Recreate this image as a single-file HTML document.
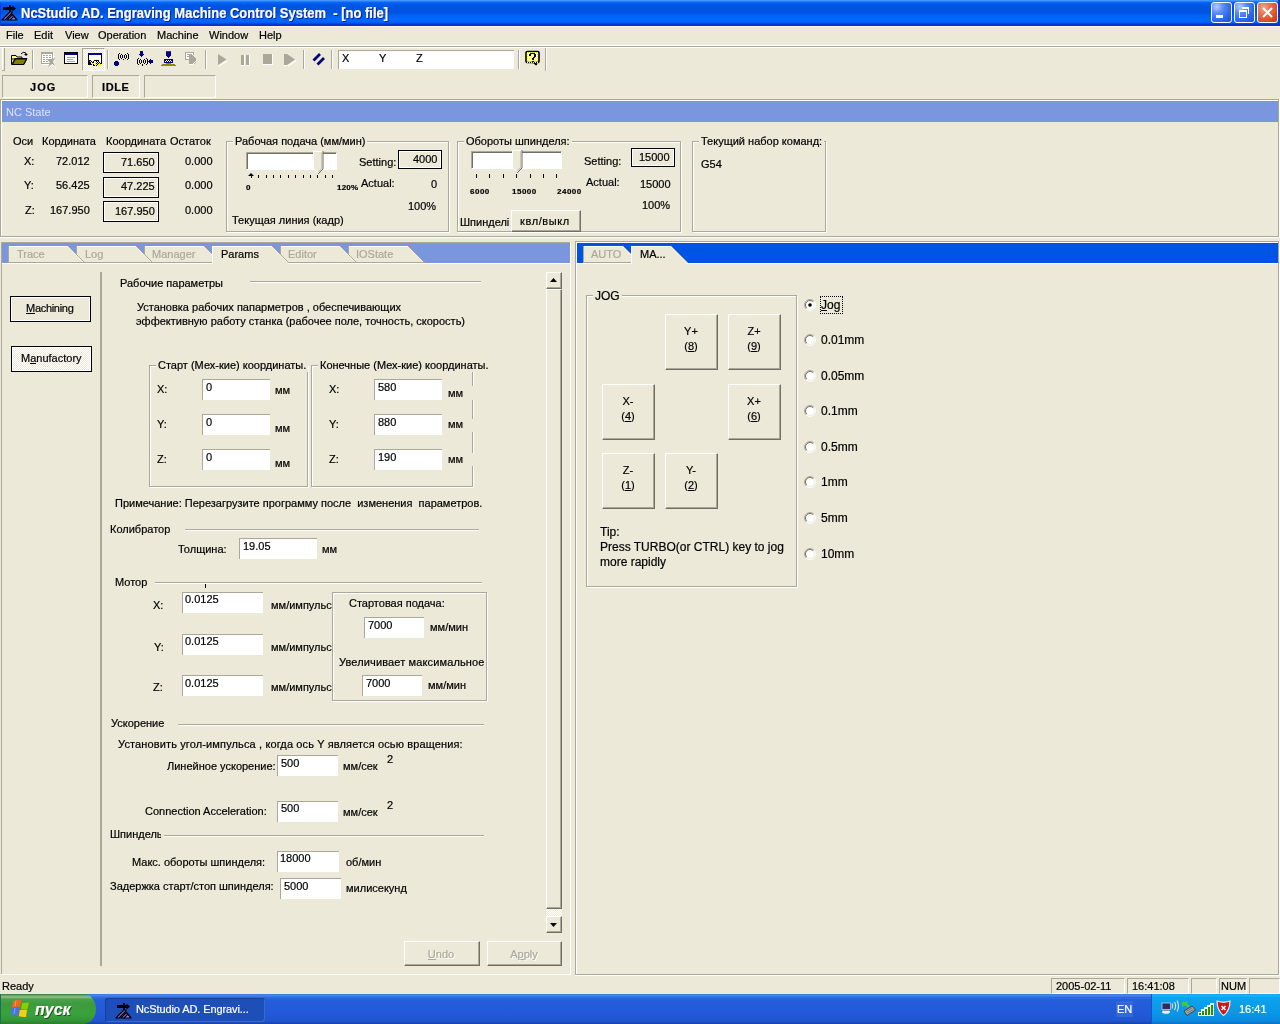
<!DOCTYPE html><html><head><meta charset="utf-8"><style>
html,body{margin:0;padding:0;width:1280px;height:1024px;overflow:hidden;background:#ECE9D8;position:relative}
.t{position:absolute;will-change:transform;-webkit-text-stroke:0.2px currentColor;font-family:"Liberation Sans",sans-serif;font-size:11px;line-height:13px;white-space:nowrap;color:#000}
.b{position:absolute}
svg{position:absolute;overflow:visible}
u{text-decoration:none;border-bottom:1px solid currentColor;line-height:10px;display:inline-block}
</style></head><body>
<div class="b" style="left:0;top:0;width:1280px;height:26px;background:linear-gradient(to bottom,#4A9BFF 0px,#3C8EFF 1px,#0A6CFF 2px,#0061F2 3px,#0058E6 5px,#0054E0 9px,#0054E2 12px,#0059EA 14px,#0062F6 16px,#0068FF 19px,#0064FA 22px,#0058EA 23px,#003AD0 24px,#0030C0 26px)"></div>
<div class="b" style="left:1278px;top:0;width:2px;height:26px;background:#0038C8"></div>
<div class="b" style="left:0;top:3px;width:1px;height:23px;background:#0A40D0"></div>
<svg style="left:0px;top:2px" width="20" height="22" viewBox="0 2 20 22">
<rect x="3" y="7" width="10" height="3" fill="#000"/>
<path d="M12.5 5.5 L16 8.5 L12.5 11.5 Z" fill="#000"/>
<rect x="9" y="5" width="2" height="7" fill="#000"/>
<path d="M2 20 L10 12 L12 12 L12 13 L5 20 Z" fill="#A77FF0" stroke="#000" stroke-width="1.2" stroke-linejoin="round"/>
<path d="M7 20 L12.5 14.5 L17 20 Z" fill="#A77FF0" stroke="#000" stroke-width="1.2" stroke-linejoin="round"/>
<path d="M10 20 L14 16" stroke="#000" stroke-width="1.3"/>
</svg>
<div class="t" style="left:21px;top:3px;font-size:13px;line-height:18px;font-weight:bold;letter-spacing:0px;color:#fff;text-shadow:1px 1px #0A1E8C;transform:scaleY(1.12);transform-origin:0 0">NcStudio AD. Engraving Machine Control System&nbsp; - [no file]</div>
<div class="b" style="left:1211px;top:2px;width:19px;height:19px;border:1px solid #fff;border-radius:3px;background:radial-gradient(circle at 25% 20%,#B8D0FF 0,#5A8DF7 30%,#2F67EC 65%,#1D4FD8 100%)"></div>
<div class="b" style="left:1234px;top:2px;width:19px;height:19px;border:1px solid #fff;border-radius:3px;background:radial-gradient(circle at 25% 20%,#B8D0FF 0,#5A8DF7 30%,#2F67EC 65%,#1D4FD8 100%)"></div>
<div class="b" style="left:1257px;top:2px;width:19px;height:19px;border:1px solid #fff;border-radius:3px;background:radial-gradient(circle at 30% 25%,#F1A58F 0,#E8704F 35%,#D84418 80%,#C23A10 100%)"></div>
<div class="b" style="left:1216px;top:15px;width:7px;height:3px;background:#fff"></div>
<div class="b" style="left:1239px;top:10px;width:6px;height:5px;border:1px solid #fff;border-top-width:2px;box-sizing:content-box"></div>
<div class="b" style="left:1242px;top:7px;width:6px;height:5px;border-top:2px solid #fff;border-right:1px solid #fff"></div>
<svg style="left:1262px;top:7px" width="11" height="11"><path d="M1 1 L10 10 M10 1 L1 10" stroke="#fff" stroke-width="2"/></svg>
<div class="b" style="left:0px;top:26px;width:1280px;height:1px;background:#F7F4E6"></div>
<div class="t" style="left:6px;top:29px;font-size:11px;color:#000;">File</div>
<div class="t" style="left:34px;top:29px;font-size:11px;color:#000;">Edit</div>
<div class="t" style="left:65px;top:29px;font-size:11px;color:#000;">View</div>
<div class="t" style="left:98px;top:29px;font-size:11px;color:#000;">Operation</div>
<div class="t" style="left:157px;top:29px;font-size:11px;color:#000;">Machine</div>
<div class="t" style="left:209px;top:29px;font-size:11px;color:#000;">Window</div>
<div class="t" style="left:259px;top:29px;font-size:11px;color:#000;">Help</div>
<div class="b" style="left:0px;top:45px;width:1280px;height:1px;background:#fff"></div>
<div class="b" style="left:0px;top:46px;width:1280px;height:1px;background:#ACA899"></div>
<div class="b" style="left:0px;top:47px;width:1280px;height:1px;background:#fff"></div>
<div class="b" style="left:2px;top:48px;width:1px;height:23px;background:#fff"></div>
<div class="b" style="left:4px;top:48px;width:1px;height:23px;background:#ACA899"></div>
<div class="b" style="left:2px;top:70px;width:3px;height:1px;background:#ACA899"></div>
<div class="b" style="left:32px;top:50px;width:1px;height:19px;background:#ACA899"></div>
<div class="b" style="left:33px;top:50px;width:1px;height:19px;background:#fff"></div>
<div class="b" style="left:107px;top:50px;width:1px;height:19px;background:#ACA899"></div>
<div class="b" style="left:108px;top:50px;width:1px;height:19px;background:#fff"></div>
<div class="b" style="left:205px;top:50px;width:1px;height:19px;background:#ACA899"></div>
<div class="b" style="left:206px;top:50px;width:1px;height:19px;background:#fff"></div>
<div class="b" style="left:303px;top:50px;width:1px;height:19px;background:#ACA899"></div>
<div class="b" style="left:304px;top:50px;width:1px;height:19px;background:#fff"></div>
<div class="b" style="left:331px;top:50px;width:1px;height:19px;background:#ACA899"></div>
<div class="b" style="left:332px;top:50px;width:1px;height:19px;background:#fff"></div>
<div class="b" style="left:518px;top:50px;width:1px;height:19px;background:#ACA899"></div>
<div class="b" style="left:519px;top:50px;width:1px;height:19px;background:#fff"></div>
<div class="b" style="left:545px;top:48px;width:1px;height:23px;background:#ACA899"></div>
<div class="b" style="left:546px;top:48px;width:1px;height:23px;background:#fff"></div>
<svg style="left:11px;top:51px" width="17" height="15" viewBox="0 0 17 15">
<path d="M10 3 Q12 0 15 2 L15 4" fill="none" stroke="#000" stroke-width="1"/>
<path d="M13 3 L15 5 L17 3" fill="#000"/>
<path d="M0.5 4.5 H5 L6 6 H11 V8 H0.5 Z" fill="#FFFF80" stroke="#000"/>
<path d="M0.5 6 V13.5 H13 L16 7.5 H4 L1 13" fill="#FFFF60" stroke="#000"/>
<path d="M1.5 13.5 L4.5 8 H15.5 L12.5 13.5 Z" fill="#808000" stroke="#000"/>
</svg>
<svg style="left:41px;top:52px" width="16" height="16" viewBox="0 0 16 16" shape-rendering="crispEdges">
<rect x="0" y="0" width="12" height="12" fill="#ACA899"/>
<rect x="1" y="2" width="10" height="9" fill="#fff"/>
<rect x="2" y="3" width="2" height="1" fill="#ACA899"/><rect x="5" y="3" width="2" height="1" fill="#ACA899"/><rect x="8" y="3" width="2" height="1" fill="#ACA899"/>
<rect x="2" y="5" width="2" height="1" fill="#ACA899"/><rect x="5" y="5" width="2" height="1" fill="#ACA899"/><rect x="8" y="5" width="2" height="1" fill="#ACA899"/>
<rect x="2" y="7" width="2" height="1" fill="#ACA899"/><rect x="5" y="7" width="2" height="1" fill="#ACA899"/>
<rect x="2" y="9" width="2" height="1" fill="#ACA899"/><rect x="5" y="9" width="2" height="1" fill="#ACA899"/>
<rect x="12" y="1" width="1" height="9" fill="#fff"/>
<rect x="1" y="12" width="8" height="1" fill="#fff"/>
</svg>
<svg style="left:46px;top:59px" width="12" height="10" viewBox="0 0 12 10">
<path d="M1 0 H6 L9 -1 L7 3 L9 8 L6 5 L2 8 L4 4 Z" fill="#ACA899"/>
<path d="M3 9 L7 5 M7 6 L10 9 M9 3 L8 1" stroke="#fff" stroke-width="1"/>
</svg>
<svg style="left:64px;top:52px" width="15" height="13" viewBox="0 0 15 13">
<rect x="0.5" y="0.5" width="13" height="11" fill="#fff" stroke="#000"/>
<rect x="1" y="1" width="12" height="2" fill="#000080"/>
<path d="M3 5.5h8M3 7.5h6M3 9.5h8" stroke="#ACA899"/>
</svg>
<div class="b" style="left:82px;top:48px;width:23px;height:23px;box-sizing:border-box;border-top:1px solid #ACA899;border-left:1px solid #ACA899;border-right:1px solid #fff;border-bottom:1px solid #fff;background:repeating-conic-gradient(#FFFFFF 0 25%,#ECE9D8 0 50%) 0 0/2px 2px"></div>
<svg style="left:88px;top:52px" width="15" height="15" viewBox="0 0 15 15" shape-rendering="crispEdges">
<rect x="0" y="1" width="14" height="2" fill="#000080"/>
<rect x="0" y="3" width="1" height="10" fill="#000"/><rect x="13" y="3" width="1" height="9" fill="#000"/>
<rect x="1" y="3" width="12" height="8" fill="#fff"/>
<rect x="1" y="8" width="2" height="5" fill="#000"/><rect x="1" y="12" width="3" height="1" fill="#000"/>
<rect x="3" y="9" width="1" height="1" fill="#000"/><rect x="4" y="10" width="1" height="2" fill="#000"/>
<rect x="6" y="8" width="5" height="1" fill="#000"/><rect x="5" y="9" width="1" height="2" fill="#000"/>
<rect x="5" y="12" width="2" height="2" fill="#000"/><rect x="8" y="13" width="1" height="1" fill="#000"/>
<rect x="2" y="9" width="1" height="1" fill="#FFFF00"/><rect x="3" y="10" width="1" height="1" fill="#FFFF00"/><rect x="4" y="11" width="2" height="1" fill="#FFFF00"/>
<rect x="6" y="12" width="2" height="1" fill="#FFFF00"/><rect x="7" y="10" width="1" height="1" fill="#FFFF00"/>
<rect x="8" y="9" width="1" height="1" fill="#000"/><rect x="10" y="9" width="1" height="1" fill="#000"/><rect x="9" y="10" width="1" height="1" fill="#000"/><rect x="11" y="10" width="1" height="1" fill="#000"/><rect x="8" y="11" width="1" height="1" fill="#000"/><rect x="10" y="11" width="1" height="1" fill="#000"/><rect x="12" y="11" width="1" height="1" fill="#000"/>
<rect x="9" y="12" width="1" height="1" fill="#000"/>
<rect x="10" y="12" width="3" height="2" fill="#FFFF00"/><rect x="12" y="10" width="1" height="1" fill="#FFFF00"/><rect x="11" y="11" width="1" height="1" fill="#FFFF00"/>
</svg>
<svg style="left:112px;top:50px" width="20" height="17" viewBox="0 0 20 17" shape-rendering="crispEdges">
<rect x="3" y="11" width="1" height="1" fill="#000080"/><rect x="4" y="11" width="1" height="1" fill="#000080"/><rect x="5" y="11" width="1" height="1" fill="#000080"/><rect x="3" y="15" width="1" height="1" fill="#000080"/><rect x="4" y="15" width="1" height="1" fill="#000080"/><rect x="5" y="15" width="1" height="1" fill="#000080"/><rect x="2" y="12" width="1" height="1" fill="#000080"/><rect x="2" y="13" width="1" height="1" fill="#000080"/><rect x="2" y="14" width="1" height="1" fill="#000080"/><rect x="3" y="12" width="1" height="1" fill="#000080"/><rect x="3" y="13" width="1" height="1" fill="#000080"/><rect x="3" y="14" width="1" height="1" fill="#000080"/><rect x="4" y="12" width="1" height="1" fill="#000080"/><rect x="4" y="13" width="1" height="1" fill="#000080"/><rect x="4" y="14" width="1" height="1" fill="#000080"/><rect x="5" y="12" width="1" height="1" fill="#000080"/><rect x="5" y="13" width="1" height="1" fill="#000080"/><rect x="5" y="14" width="1" height="1" fill="#000080"/><rect x="6" y="12" width="1" height="1" fill="#000080"/><rect x="6" y="13" width="1" height="1" fill="#000080"/><rect x="6" y="14" width="1" height="1" fill="#000080"/>
<rect x="6" y="4" width="1" height="1" fill="#000"/><rect x="6" y="5" width="1" height="1" fill="#000"/><rect x="6" y="6" width="1" height="1" fill="#000"/><rect x="6" y="7" width="1" height="1" fill="#000"/><rect x="6" y="8" width="1" height="1" fill="#000"/><rect x="7" y="3" width="1" height="1" fill="#000"/><rect x="7" y="9" width="1" height="1" fill="#000"/><rect x="8" y="5" width="1" height="1" fill="#000"/><rect x="8" y="6" width="1" height="1" fill="#000"/><rect x="8" y="7" width="1" height="1" fill="#000"/><rect x="10" y="5" width="1" height="1" fill="#000"/><rect x="10" y="6" width="1" height="1" fill="#000"/><rect x="10" y="7" width="1" height="1" fill="#000"/><rect x="9" y="4" width="1" height="1" fill="#000"/><rect x="9" y="8" width="1" height="1" fill="#000"/><rect x="11" y="9" width="1" height="1" fill="#000"/><rect x="12" y="5" width="1" height="1" fill="#000"/><rect x="12" y="6" width="1" height="1" fill="#000"/><rect x="12" y="7" width="1" height="1" fill="#000"/><rect x="14" y="5" width="1" height="1" fill="#000"/><rect x="14" y="6" width="1" height="1" fill="#000"/><rect x="14" y="7" width="1" height="1" fill="#000"/><rect x="13" y="4" width="1" height="1" fill="#000"/><rect x="13" y="8" width="1" height="1" fill="#000"/><rect x="15" y="3" width="1" height="1" fill="#000"/><rect x="15" y="9" width="1" height="1" fill="#000"/><rect x="16" y="4" width="1" height="1" fill="#000"/><rect x="16" y="5" width="1" height="1" fill="#000"/><rect x="16" y="6" width="1" height="1" fill="#000"/><rect x="16" y="7" width="1" height="1" fill="#000"/><rect x="16" y="8" width="1" height="1" fill="#000"/>
</svg>
<svg style="left:134px;top:48px" width="20" height="19" viewBox="0 0 20 19" shape-rendering="crispEdges">
<rect x="6" y="3" width="1" height="1" fill="#000080"/><rect x="6" y="4" width="1" height="1" fill="#000080"/><rect x="6" y="5" width="1" height="1" fill="#000080"/><rect x="7" y="3" width="1" height="1" fill="#000080"/><rect x="7" y="4" width="1" height="1" fill="#000080"/><rect x="7" y="5" width="1" height="1" fill="#000080"/><rect x="8" y="3" width="1" height="1" fill="#000080"/><rect x="8" y="4" width="1" height="1" fill="#000080"/><rect x="8" y="5" width="1" height="1" fill="#000080"/><rect x="5" y="6" width="1" height="1" fill="#000080"/><rect x="6" y="6" width="1" height="1" fill="#000080"/><rect x="7" y="6" width="1" height="1" fill="#000080"/><rect x="8" y="6" width="1" height="1" fill="#000080"/><rect x="9" y="6" width="1" height="1" fill="#000080"/><rect x="6" y="7" width="1" height="1" fill="#000080"/><rect x="7" y="7" width="1" height="1" fill="#000080"/><rect x="8" y="7" width="1" height="1" fill="#000080"/><rect x="7" y="8" width="1" height="1" fill="#000080"/><rect x="14" y="13" width="1" height="1" fill="#000080"/><rect x="15" y="12" width="1" height="1" fill="#000080"/><rect x="15" y="13" width="1" height="1" fill="#000080"/><rect x="15" y="14" width="1" height="1" fill="#000080"/><rect x="16" y="11" width="1" height="1" fill="#000080"/><rect x="16" y="12" width="1" height="1" fill="#000080"/><rect x="16" y="13" width="1" height="1" fill="#000080"/><rect x="16" y="14" width="1" height="1" fill="#000080"/><rect x="16" y="15" width="1" height="1" fill="#000080"/><rect x="17" y="12" width="1" height="1" fill="#000080"/><rect x="17" y="13" width="1" height="1" fill="#000080"/><rect x="17" y="14" width="1" height="1" fill="#000080"/><rect x="18" y="12" width="1" height="1" fill="#000080"/><rect x="18" y="13" width="1" height="1" fill="#000080"/><rect x="18" y="14" width="1" height="1" fill="#000080"/>
<rect x="3" y="11" width="1" height="1" fill="#000"/><rect x="3" y="12" width="1" height="1" fill="#000"/><rect x="3" y="13" width="1" height="1" fill="#000"/><rect x="3" y="14" width="1" height="1" fill="#000"/><rect x="3" y="15" width="1" height="1" fill="#000"/><rect x="4" y="10" width="1" height="1" fill="#000"/><rect x="4" y="16" width="1" height="1" fill="#000"/><rect x="5" y="12" width="1" height="1" fill="#000"/><rect x="5" y="13" width="1" height="1" fill="#000"/><rect x="5" y="14" width="1" height="1" fill="#000"/><rect x="7" y="12" width="1" height="1" fill="#000"/><rect x="7" y="13" width="1" height="1" fill="#000"/><rect x="7" y="14" width="1" height="1" fill="#000"/><rect x="6" y="11" width="1" height="1" fill="#000"/><rect x="6" y="15" width="1" height="1" fill="#000"/><rect x="8" y="16" width="1" height="1" fill="#000"/><rect x="9" y="12" width="1" height="1" fill="#000"/><rect x="9" y="13" width="1" height="1" fill="#000"/><rect x="9" y="14" width="1" height="1" fill="#000"/><rect x="11" y="12" width="1" height="1" fill="#000"/><rect x="11" y="13" width="1" height="1" fill="#000"/><rect x="11" y="14" width="1" height="1" fill="#000"/><rect x="10" y="11" width="1" height="1" fill="#000"/><rect x="10" y="15" width="1" height="1" fill="#000"/><rect x="12" y="10" width="1" height="1" fill="#000"/><rect x="12" y="16" width="1" height="1" fill="#000"/><rect x="13" y="11" width="1" height="1" fill="#000"/><rect x="13" y="12" width="1" height="1" fill="#000"/><rect x="13" y="13" width="1" height="1" fill="#000"/><rect x="13" y="14" width="1" height="1" fill="#000"/><rect x="13" y="15" width="1" height="1" fill="#000"/>
<rect x="8" y="17" width="1" height="1" fill="#000"/>
</svg>
<svg style="left:158px;top:48px" width="20" height="20" viewBox="0 0 20 20" shape-rendering="crispEdges">
<rect x="8" y="3" width="1" height="1" fill="#A0007A"/><rect x="9" y="3" width="1" height="1" fill="#A0007A"/><rect x="10" y="3" width="1" height="1" fill="#A0007A"/><rect x="11" y="3" width="1" height="1" fill="#A0007A"/><rect x="12" y="3" width="1" height="1" fill="#A0007A"/><rect x="8" y="4" width="1" height="1" fill="#000080"/><rect x="8" y="5" width="1" height="1" fill="#000080"/><rect x="8" y="6" width="1" height="1" fill="#000080"/><rect x="8" y="7" width="1" height="1" fill="#000080"/><rect x="9" y="4" width="1" height="1" fill="#000080"/><rect x="9" y="5" width="1" height="1" fill="#000080"/><rect x="9" y="6" width="1" height="1" fill="#000080"/><rect x="9" y="7" width="1" height="1" fill="#000080"/><rect x="10" y="4" width="1" height="1" fill="#000080"/><rect x="10" y="5" width="1" height="1" fill="#000080"/><rect x="10" y="6" width="1" height="1" fill="#000080"/><rect x="10" y="7" width="1" height="1" fill="#000080"/><rect x="11" y="4" width="1" height="1" fill="#000080"/><rect x="11" y="5" width="1" height="1" fill="#000080"/><rect x="11" y="6" width="1" height="1" fill="#000080"/><rect x="11" y="7" width="1" height="1" fill="#000080"/><rect x="12" y="4" width="1" height="1" fill="#000080"/><rect x="12" y="5" width="1" height="1" fill="#000080"/><rect x="12" y="6" width="1" height="1" fill="#000080"/><rect x="12" y="7" width="1" height="1" fill="#000080"/><rect x="9" y="8" width="1" height="1" fill="#000080"/><rect x="10" y="8" width="1" height="1" fill="#000080"/><rect x="11" y="8" width="1" height="1" fill="#000080"/><rect x="10" y="9" width="1" height="1" fill="#000080"/><rect x="6" y="11" width="1" height="1" fill="#000080"/><rect x="6" y="12" width="1" height="1" fill="#000080"/><rect x="6" y="13" width="1" height="1" fill="#000080"/><rect x="6" y="14" width="1" height="1" fill="#000080"/><rect x="7" y="11" width="1" height="1" fill="#000080"/><rect x="7" y="12" width="1" height="1" fill="#000080"/><rect x="7" y="14" width="1" height="1" fill="#000080"/><rect x="8" y="11" width="1" height="1" fill="#000080"/><rect x="8" y="13" width="1" height="1" fill="#000080"/><rect x="8" y="14" width="1" height="1" fill="#000080"/><rect x="9" y="11" width="1" height="1" fill="#000080"/><rect x="9" y="12" width="1" height="1" fill="#000080"/><rect x="9" y="14" width="1" height="1" fill="#000080"/><rect x="10" y="11" width="1" height="1" fill="#000080"/><rect x="10" y="13" width="1" height="1" fill="#000080"/><rect x="10" y="14" width="1" height="1" fill="#000080"/><rect x="11" y="11" width="1" height="1" fill="#000080"/><rect x="11" y="12" width="1" height="1" fill="#000080"/><rect x="11" y="14" width="1" height="1" fill="#000080"/><rect x="12" y="11" width="1" height="1" fill="#000080"/><rect x="12" y="13" width="1" height="1" fill="#000080"/><rect x="12" y="14" width="1" height="1" fill="#000080"/><rect x="13" y="11" width="1" height="1" fill="#000080"/><rect x="13" y="12" width="1" height="1" fill="#000080"/><rect x="13" y="14" width="1" height="1" fill="#000080"/><rect x="14" y="11" width="1" height="1" fill="#000080"/><rect x="14" y="12" width="1" height="1" fill="#000080"/><rect x="14" y="13" width="1" height="1" fill="#000080"/><rect x="14" y="14" width="1" height="1" fill="#000080"/><rect x="8" y="12" width="1" height="1" fill="#fff"/><rect x="10" y="12" width="1" height="1" fill="#fff"/><rect x="12" y="12" width="1" height="1" fill="#fff"/><rect x="7" y="13" width="1" height="1" fill="#fff"/><rect x="9" y="13" width="1" height="1" fill="#fff"/><rect x="11" y="13" width="1" height="1" fill="#fff"/><rect x="13" y="13" width="1" height="1" fill="#fff"/><rect x="8" y="15" width="1" height="1" fill="#8C8C00"/><rect x="9" y="15" width="1" height="1" fill="#8C8C00"/><rect x="10" y="15" width="1" height="1" fill="#8C8C00"/><rect x="11" y="15" width="1" height="1" fill="#8C8C00"/><rect x="12" y="15" width="1" height="1" fill="#8C8C00"/><rect x="4" y="16" width="1" height="1" fill="#8C8C00"/><rect x="5" y="16" width="1" height="1" fill="#8C8C00"/><rect x="6" y="16" width="1" height="1" fill="#8C8C00"/><rect x="7" y="16" width="1" height="1" fill="#8C8C00"/><rect x="8" y="16" width="1" height="1" fill="#8C8C00"/><rect x="9" y="16" width="1" height="1" fill="#8C8C00"/><rect x="10" y="16" width="1" height="1" fill="#8C8C00"/><rect x="11" y="16" width="1" height="1" fill="#8C8C00"/><rect x="12" y="16" width="1" height="1" fill="#8C8C00"/><rect x="13" y="16" width="1" height="1" fill="#8C8C00"/><rect x="14" y="16" width="1" height="1" fill="#8C8C00"/><rect x="15" y="16" width="1" height="1" fill="#8C8C00"/><rect x="16" y="16" width="1" height="1" fill="#8C8C00"/><rect x="3" y="17" width="1" height="1" fill="#8C8C00"/><rect x="4" y="17" width="1" height="1" fill="#8C8C00"/><rect x="5" y="17" width="1" height="1" fill="#8C8C00"/><rect x="6" y="17" width="1" height="1" fill="#8C8C00"/><rect x="7" y="17" width="1" height="1" fill="#8C8C00"/><rect x="8" y="17" width="1" height="1" fill="#8C8C00"/><rect x="9" y="17" width="1" height="1" fill="#8C8C00"/><rect x="10" y="17" width="1" height="1" fill="#8C8C00"/><rect x="11" y="17" width="1" height="1" fill="#8C8C00"/><rect x="12" y="17" width="1" height="1" fill="#8C8C00"/><rect x="13" y="17" width="1" height="1" fill="#8C8C00"/><rect x="14" y="17" width="1" height="1" fill="#8C8C00"/><rect x="15" y="17" width="1" height="1" fill="#8C8C00"/><rect x="16" y="17" width="1" height="1" fill="#8C8C00"/><rect x="17" y="17" width="1" height="1" fill="#8C8C00"/>
</svg>
<svg style="left:182px;top:48px" width="20" height="20" viewBox="0 0 20 20" shape-rendering="crispEdges">
<rect x="4" y="5" width="1" height="1" fill="#fff"/><rect x="4" y="6" width="1" height="1" fill="#fff"/><rect x="4" y="7" width="1" height="1" fill="#fff"/><rect x="4" y="8" width="1" height="1" fill="#fff"/><rect x="4" y="9" width="1" height="1" fill="#fff"/><rect x="4" y="10" width="1" height="1" fill="#fff"/><rect x="5" y="5" width="1" height="1" fill="#fff"/><rect x="5" y="6" width="1" height="1" fill="#fff"/><rect x="5" y="7" width="1" height="1" fill="#fff"/><rect x="5" y="8" width="1" height="1" fill="#fff"/><rect x="5" y="9" width="1" height="1" fill="#fff"/><rect x="5" y="10" width="1" height="1" fill="#fff"/><rect x="6" y="5" width="1" height="1" fill="#fff"/><rect x="6" y="6" width="1" height="1" fill="#fff"/><rect x="6" y="7" width="1" height="1" fill="#fff"/><rect x="6" y="8" width="1" height="1" fill="#fff"/><rect x="6" y="9" width="1" height="1" fill="#fff"/><rect x="6" y="10" width="1" height="1" fill="#fff"/><rect x="7" y="5" width="1" height="1" fill="#fff"/><rect x="7" y="6" width="1" height="1" fill="#fff"/><rect x="7" y="7" width="1" height="1" fill="#fff"/><rect x="7" y="8" width="1" height="1" fill="#fff"/><rect x="7" y="9" width="1" height="1" fill="#fff"/><rect x="7" y="10" width="1" height="1" fill="#fff"/><rect x="8" y="5" width="1" height="1" fill="#fff"/><rect x="8" y="6" width="1" height="1" fill="#fff"/><rect x="8" y="7" width="1" height="1" fill="#fff"/><rect x="8" y="8" width="1" height="1" fill="#fff"/><rect x="8" y="9" width="1" height="1" fill="#fff"/><rect x="8" y="10" width="1" height="1" fill="#fff"/><rect x="9" y="5" width="1" height="1" fill="#fff"/><rect x="9" y="6" width="1" height="1" fill="#fff"/><rect x="9" y="7" width="1" height="1" fill="#fff"/><rect x="9" y="8" width="1" height="1" fill="#fff"/><rect x="9" y="9" width="1" height="1" fill="#fff"/><rect x="9" y="10" width="1" height="1" fill="#fff"/><rect x="10" y="5" width="1" height="1" fill="#fff"/><rect x="10" y="6" width="1" height="1" fill="#fff"/><rect x="10" y="7" width="1" height="1" fill="#fff"/><rect x="10" y="8" width="1" height="1" fill="#fff"/><rect x="10" y="9" width="1" height="1" fill="#fff"/><rect x="10" y="10" width="1" height="1" fill="#fff"/><rect x="3" y="4" width="1" height="1" fill="#ACA899"/><rect x="4" y="4" width="1" height="1" fill="#ACA899"/><rect x="5" y="4" width="1" height="1" fill="#ACA899"/><rect x="6" y="4" width="1" height="1" fill="#ACA899"/><rect x="7" y="4" width="1" height="1" fill="#ACA899"/><rect x="8" y="4" width="1" height="1" fill="#ACA899"/><rect x="9" y="4" width="1" height="1" fill="#ACA899"/><rect x="10" y="4" width="1" height="1" fill="#ACA899"/><rect x="11" y="4" width="1" height="1" fill="#ACA899"/><rect x="3" y="11" width="1" height="1" fill="#ACA899"/><rect x="4" y="11" width="1" height="1" fill="#ACA899"/><rect x="5" y="11" width="1" height="1" fill="#ACA899"/><rect x="6" y="11" width="1" height="1" fill="#ACA899"/><rect x="3" y="4" width="1" height="1" fill="#ACA899"/><rect x="3" y="5" width="1" height="1" fill="#ACA899"/><rect x="3" y="6" width="1" height="1" fill="#ACA899"/><rect x="3" y="7" width="1" height="1" fill="#ACA899"/><rect x="3" y="8" width="1" height="1" fill="#ACA899"/><rect x="3" y="9" width="1" height="1" fill="#ACA899"/><rect x="3" y="10" width="1" height="1" fill="#ACA899"/><rect x="3" y="11" width="1" height="1" fill="#ACA899"/><rect x="11" y="4" width="1" height="1" fill="#ACA899"/><rect x="11" y="5" width="1" height="1" fill="#ACA899"/><rect x="11" y="6" width="1" height="1" fill="#ACA899"/><rect x="5" y="6" width="1" height="1" fill="#ACA899"/><rect x="6" y="6" width="1" height="1" fill="#ACA899"/><rect x="7" y="6" width="1" height="1" fill="#ACA899"/><rect x="8" y="6" width="1" height="1" fill="#ACA899"/><rect x="9" y="6" width="1" height="1" fill="#ACA899"/><rect x="5" y="8" width="1" height="1" fill="#ACA899"/><rect x="6" y="8" width="1" height="1" fill="#ACA899"/><rect x="7" y="7" width="1" height="1" fill="#ACA899"/><rect x="7" y="8" width="1" height="1" fill="#ACA899"/><rect x="7" y="9" width="1" height="1" fill="#ACA899"/><rect x="7" y="10" width="1" height="1" fill="#ACA899"/><rect x="7" y="11" width="1" height="1" fill="#ACA899"/><rect x="7" y="12" width="1" height="1" fill="#ACA899"/><rect x="7" y="13" width="1" height="1" fill="#ACA899"/><rect x="7" y="14" width="1" height="1" fill="#ACA899"/><rect x="7" y="15" width="1" height="1" fill="#ACA899"/><rect x="8" y="7" width="1" height="1" fill="#ACA899"/><rect x="8" y="8" width="1" height="1" fill="#ACA899"/><rect x="8" y="9" width="1" height="1" fill="#ACA899"/><rect x="8" y="10" width="1" height="1" fill="#ACA899"/><rect x="8" y="11" width="1" height="1" fill="#ACA899"/><rect x="8" y="12" width="1" height="1" fill="#ACA899"/><rect x="8" y="13" width="1" height="1" fill="#ACA899"/><rect x="8" y="14" width="1" height="1" fill="#ACA899"/><rect x="8" y="15" width="1" height="1" fill="#ACA899"/><rect x="9" y="7" width="1" height="1" fill="#ACA899"/><rect x="9" y="8" width="1" height="1" fill="#ACA899"/><rect x="9" y="9" width="1" height="1" fill="#ACA899"/><rect x="9" y="10" width="1" height="1" fill="#ACA899"/><rect x="9" y="11" width="1" height="1" fill="#ACA899"/><rect x="9" y="12" width="1" height="1" fill="#ACA899"/><rect x="9" y="13" width="1" height="1" fill="#ACA899"/><rect x="9" y="14" width="1" height="1" fill="#ACA899"/><rect x="9" y="15" width="1" height="1" fill="#ACA899"/><rect x="10" y="7" width="1" height="1" fill="#ACA899"/><rect x="10" y="8" width="1" height="1" fill="#ACA899"/><rect x="10" y="9" width="1" height="1" fill="#ACA899"/><rect x="10" y="10" width="1" height="1" fill="#ACA899"/><rect x="10" y="11" width="1" height="1" fill="#ACA899"/><rect x="10" y="12" width="1" height="1" fill="#ACA899"/><rect x="10" y="13" width="1" height="1" fill="#ACA899"/><rect x="10" y="14" width="1" height="1" fill="#ACA899"/><rect x="10" y="15" width="1" height="1" fill="#ACA899"/><rect x="11" y="8" width="1" height="1" fill="#ACA899"/><rect x="11" y="9" width="1" height="1" fill="#ACA899"/><rect x="11" y="10" width="1" height="1" fill="#ACA899"/><rect x="11" y="11" width="1" height="1" fill="#ACA899"/><rect x="11" y="12" width="1" height="1" fill="#ACA899"/><rect x="11" y="13" width="1" height="1" fill="#ACA899"/><rect x="11" y="14" width="1" height="1" fill="#ACA899"/><rect x="11" y="15" width="1" height="1" fill="#ACA899"/><rect x="12" y="9" width="1" height="1" fill="#ACA899"/><rect x="12" y="10" width="1" height="1" fill="#ACA899"/><rect x="12" y="11" width="1" height="1" fill="#ACA899"/><rect x="12" y="12" width="1" height="1" fill="#ACA899"/><rect x="12" y="13" width="1" height="1" fill="#ACA899"/><rect x="12" y="14" width="1" height="1" fill="#ACA899"/><rect x="12" y="15" width="1" height="1" fill="#ACA899"/><rect x="13" y="10" width="1" height="1" fill="#ACA899"/><rect x="13" y="11" width="1" height="1" fill="#ACA899"/><rect x="13" y="12" width="1" height="1" fill="#ACA899"/><rect x="13" y="13" width="1" height="1" fill="#ACA899"/><rect x="13" y="14" width="1" height="1" fill="#ACA899"/><rect x="14" y="12" width="1" height="1" fill="#ACA899"/><rect x="7" y="16" width="1" height="1" fill="#fff"/><rect x="8" y="16" width="1" height="1" fill="#fff"/><rect x="9" y="16" width="1" height="1" fill="#fff"/><rect x="10" y="16" width="1" height="1" fill="#fff"/><rect x="11" y="15" width="1" height="1" fill="#fff"/><rect x="12" y="14" width="1" height="1" fill="#fff"/><rect x="13" y="13" width="1" height="1" fill="#fff"/><rect x="14" y="12" width="1" height="1" fill="#fff"/><rect x="15" y="11" width="1" height="1" fill="#fff"/>
</svg>
<svg style="left:210px;top:50px" width="92" height="20" viewBox="0 0 92 20">
<path d="M8 4 L16.5 9.5 L8 15 Z" fill="#ACA899"/>
<path d="M9 16 L17.5 10.5" stroke="#fff" stroke-width="1.2"/>
<g shape-rendering="crispEdges">
<rect x="31" y="5" width="3" height="10" fill="#ACA899"/><rect x="34" y="5" width="1" height="11" fill="#fff"/><rect x="31" y="15" width="3" height="1" fill="#fff"/>
<rect x="36" y="5" width="3" height="10" fill="#ACA899"/><rect x="39" y="5" width="1" height="11" fill="#fff"/><rect x="36" y="15" width="3" height="1" fill="#fff"/>
<rect x="53" y="4" width="9" height="10" fill="#ACA899"/><rect x="62" y="4" width="1" height="11" fill="#fff"/><rect x="53" y="14" width="9" height="1" fill="#fff"/>
<rect x="74" y="4" width="3" height="11" fill="#ACA899"/><rect x="74" y="15" width="3" height="1" fill="#fff"/>
</g>
<path d="M77 4 L85 9.5 L77 15 Z" fill="#ACA899"/>
<path d="M78 16 L86 10.5" stroke="#fff" stroke-width="1.2"/>
</svg>
<svg style="left:312px;top:52px" width="13" height="13" viewBox="0 0 13 13">
<path d="M1.5 8.5 L8 2 M5.5 12.5 L12 6" stroke="#000080" stroke-width="2.8"/>
</svg>
<div class="b" style="left:338px;top:50px;width:176px;height:19px;background:#fff;border-top:1px solid #ACA899;border-left:1px solid #ACA899;box-sizing:border-box"></div>
<div class="t" style="left:342px;top:52px;font-size:11px;color:#000;">X</div>
<div class="t" style="left:379px;top:52px;font-size:11px;color:#000;">Y</div>
<div class="t" style="left:416px;top:52px;font-size:11px;color:#000;">Z</div>
<svg style="left:525px;top:50px" width="16" height="17" viewBox="0 0 16 17">
<path d="M2.5 1.5 h10 a1.5 1.5 0 0 1 1.5 1.5 v8 a1.5 1.5 0 0 1 -1.5 1.5 h-2 l1 2.5 l-3 -2.5 h-6 a1.5 1.5 0 0 1 -1.5 -1.5 v-8 a1.5 1.5 0 0 1 1.5 -1.5z" fill="#fff" stroke="#000" stroke-width="1.6"/>
<g shape-rendering="crispEdges"><rect x="2" y="2" width="1" height="1" fill="#FFFF00"/><rect x="2" y="4" width="1" height="1" fill="#FFFF00"/><rect x="2" y="6" width="1" height="1" fill="#FFFF00"/><rect x="2" y="8" width="1" height="1" fill="#FFFF00"/><rect x="2" y="10" width="1" height="1" fill="#FFFF00"/><rect x="2" y="12" width="1" height="1" fill="#FFFF00"/><rect x="4" y="2" width="1" height="1" fill="#FFFF00"/><rect x="4" y="4" width="1" height="1" fill="#FFFF00"/><rect x="4" y="6" width="1" height="1" fill="#FFFF00"/><rect x="4" y="8" width="1" height="1" fill="#FFFF00"/><rect x="4" y="10" width="1" height="1" fill="#FFFF00"/><rect x="4" y="12" width="1" height="1" fill="#FFFF00"/><rect x="6" y="2" width="1" height="1" fill="#FFFF00"/><rect x="6" y="4" width="1" height="1" fill="#FFFF00"/><rect x="6" y="6" width="1" height="1" fill="#FFFF00"/><rect x="6" y="8" width="1" height="1" fill="#FFFF00"/><rect x="6" y="10" width="1" height="1" fill="#FFFF00"/><rect x="6" y="12" width="1" height="1" fill="#FFFF00"/><rect x="8" y="2" width="1" height="1" fill="#FFFF00"/><rect x="8" y="4" width="1" height="1" fill="#FFFF00"/><rect x="8" y="6" width="1" height="1" fill="#FFFF00"/><rect x="8" y="8" width="1" height="1" fill="#FFFF00"/><rect x="8" y="10" width="1" height="1" fill="#FFFF00"/><rect x="8" y="12" width="1" height="1" fill="#FFFF00"/><rect x="10" y="2" width="1" height="1" fill="#FFFF00"/><rect x="10" y="4" width="1" height="1" fill="#FFFF00"/><rect x="10" y="6" width="1" height="1" fill="#FFFF00"/><rect x="10" y="8" width="1" height="1" fill="#FFFF00"/><rect x="10" y="10" width="1" height="1" fill="#FFFF00"/><rect x="10" y="12" width="1" height="1" fill="#FFFF00"/><rect x="12" y="2" width="1" height="1" fill="#FFFF00"/><rect x="12" y="4" width="1" height="1" fill="#FFFF00"/><rect x="12" y="6" width="1" height="1" fill="#FFFF00"/><rect x="12" y="8" width="1" height="1" fill="#FFFF00"/><rect x="12" y="10" width="1" height="1" fill="#FFFF00"/><rect x="12" y="12" width="1" height="1" fill="#FFFF00"/></g>
<g shape-rendering="crispEdges" fill="#000080"><rect x="5" y="3" width="5" height="1"/><rect x="4" y="4" width="2" height="2"/><rect x="9" y="4" width="2" height="3"/><rect x="8" y="7" width="2" height="1"/><rect x="7" y="8" width="2" height="2"/><rect x="7" y="11" width="2" height="1"/></g>
</svg>
<div class="b" style="left:2px;top:75px;width:86px;height:23px;box-sizing:border-box;border-top:1px solid #ACA899;border-left:1px solid #ACA899;border-right:1px solid #fff;border-bottom:1px solid #fff"></div>
<div class="b" style="left:92px;top:75px;width:48px;height:23px;box-sizing:border-box;border-top:1px solid #ACA899;border-left:1px solid #ACA899;border-right:1px solid #fff;border-bottom:1px solid #fff"></div>
<div class="b" style="left:144px;top:75px;width:72px;height:23px;box-sizing:border-box;border-top:1px solid #ACA899;border-left:1px solid #ACA899;border-right:1px solid #fff;border-bottom:1px solid #fff"></div>
<div class="t" style="left:30px;top:81px;font-size:11px;font-weight:bold;letter-spacing:1.1px">JOG</div>
<div class="t" style="left:102px;top:81px;font-size:11px;font-weight:bold;letter-spacing:0.6px">IDLE</div>
<div class="b" style="left:0px;top:99px;width:1279px;height:1px;background:#ACA899"></div>
<div class="b" style="left:1px;top:100px;width:1277px;height:1px;background:#fff"></div>
<div class="b" style="left:0px;top:99px;width:1px;height:138px;background:#ACA899"></div>
<div class="b" style="left:1px;top:100px;width:1px;height:137px;background:#fff"></div>
<div class="b" style="left:1278px;top:99px;width:1px;height:138px;background:#ACA899"></div>
<div class="b" style="left:1279px;top:99px;width:1px;height:139px;background:#fff"></div>
<div class="b" style="left:2px;top:101px;width:1276px;height:21px;background:#7A96DF"></div>
<div class="t" style="left:6px;top:106px;font-size:11px;color:#D8E4F8;-webkit-text-stroke:0">NC State</div>
<div class="b" style="left:0px;top:236px;width:1279px;height:1px;background:#ACA899"></div>
<div class="b" style="left:0px;top:237px;width:1280px;height:1px;background:#fff"></div>
<div class="t" style="left:13px;top:135px;font-size:11px;color:#000;">Оси</div>
<div class="t" style="left:42px;top:135px;font-size:11px;color:#000;">Кордината</div>
<div class="t" style="left:106px;top:135px;font-size:11px;color:#000;">Координата</div>
<div class="t" style="left:170px;top:135px;font-size:11px;color:#000;">Остаток</div>
<div class="t" style="right:1246px;top:155px;font-size:11px;color:#000;">X:</div>
<div class="t" style="right:1190px;top:155px;font-size:11px;color:#000;">72.012</div>
<div class="t" style="right:1067px;top:155px;font-size:11px;color:#000;">0.000</div>
<div class="b" style="left:103px;top:152px;width:56px;height:21px;border:1px solid #000;box-sizing:border-box;box-shadow:inset 1px 1px #fff,inset -1px -1px #fff"></div>
<div class="t" style="right:1125px;top:156px;font-size:11px;color:#000;">71.650</div>
<div class="t" style="right:1246px;top:179px;font-size:11px;color:#000;">Y:</div>
<div class="t" style="right:1190px;top:179px;font-size:11px;color:#000;">56.425</div>
<div class="t" style="right:1067px;top:179px;font-size:11px;color:#000;">0.000</div>
<div class="b" style="left:103px;top:177px;width:56px;height:21px;border:1px solid #000;box-sizing:border-box;box-shadow:inset 1px 1px #fff,inset -1px -1px #fff"></div>
<div class="t" style="right:1125px;top:180px;font-size:11px;color:#000;">47.225</div>
<div class="t" style="right:1245px;top:204px;font-size:11px;color:#000;">Z:</div>
<div class="t" style="right:1190px;top:204px;font-size:11px;color:#000;">167.950</div>
<div class="t" style="right:1067px;top:204px;font-size:11px;color:#000;">0.000</div>
<div class="b" style="left:103px;top:201px;width:56px;height:21px;border:1px solid #000;box-sizing:border-box;box-shadow:inset 1px 1px #fff,inset -1px -1px #fff"></div>
<div class="t" style="right:1125px;top:205px;font-size:11px;color:#000;">167.950</div>
<div class="b" style="left:227px;top:142px;width:223px;height:91px;border:1px solid #fff;box-sizing:border-box"></div>
<div class="b" style="left:226px;top:141px;width:223px;height:91px;border:1px solid #ACA899;box-sizing:border-box"></div>
<div class="t" style="left:233px;top:135px;padding:0 2px;background:#ECE9D8;font-size:11px">Рабочая подача (мм/мин)</div>
<div class="b" style="left:246px;top:152px;width:91px;height:18px;background:#fff;box-sizing:border-box;border-top:1px solid #ACA899;border-left:1px solid #ACA899;border-right:1px solid #fff;border-bottom:1px solid #fff;box-shadow:inset 1px 1px #716F64"></div>
<svg style="left:313px;top:151px" width="11" height="23" viewBox="0 0 11 23">
<path d="M0.5 0.5 H9.5 V17.5 L5 22 L0.5 17.5 Z" fill="#ECE9D8" stroke="#fff"/>
<path d="M10 0 V18 L5 23" stroke="#716F64" fill="none"/>
<path d="M9 1 V17.5 L5 21.5" stroke="#ACA899" fill="none"/>
</svg>
<div class="b" style="left:251px;top:175px;width:1px;height:3px;background:#000"></div>
<div class="b" style="left:258px;top:175px;width:1px;height:3px;background:#000"></div>
<div class="b" style="left:266px;top:175px;width:1px;height:3px;background:#000"></div>
<div class="b" style="left:273px;top:175px;width:1px;height:3px;background:#000"></div>
<div class="b" style="left:280px;top:175px;width:1px;height:3px;background:#000"></div>
<div class="b" style="left:288px;top:175px;width:1px;height:3px;background:#000"></div>
<div class="b" style="left:295px;top:175px;width:1px;height:3px;background:#000"></div>
<div class="b" style="left:303px;top:175px;width:1px;height:3px;background:#000"></div>
<div class="b" style="left:310px;top:175px;width:1px;height:3px;background:#000"></div>
<div class="b" style="left:317px;top:175px;width:1px;height:3px;background:#000"></div>
<div class="b" style="left:325px;top:175px;width:1px;height:3px;background:#000"></div>
<div class="b" style="left:332px;top:175px;width:1px;height:3px;background:#000"></div>
<svg style="left:248px;top:173px" width="7" height="4"><path d="M0 3 L3 0 L6 3Z" fill="#000"/></svg>
<div class="t" style="left:246px;top:183px;font-size:8px;line-height:10px;font-weight:bold">0</div>
<div class="t" style="left:337px;top:183px;font-size:8px;line-height:10px;font-weight:bold;letter-spacing:0.2px">120%</div>
<div class="t" style="left:359px;top:156px;font-size:11px;color:#000;">Setting:</div>
<div class="b" style="left:398px;top:150px;width:44px;height:19px;border:1px solid #000;box-sizing:border-box;box-shadow:inset 1px 1px #fff,inset -1px -1px #fff"></div>
<div class="t" style="right:843px;top:153px;font-size:11px;color:#000;">4000</div>
<div class="t" style="left:361px;top:177px;font-size:11px;color:#000;">Actual:</div>
<div class="t" style="right:843px;top:178px;font-size:11px;color:#000;">0</div>
<div class="t" style="right:844px;top:200px;font-size:11px;color:#000;">100%</div>
<div class="t" style="left:232px;top:214px;font-size:11px;color:#000;">Текущая линия (кадр)</div>
<div class="b" style="left:458px;top:142px;width:224px;height:91px;border:1px solid #fff;box-sizing:border-box"></div>
<div class="b" style="left:457px;top:141px;width:224px;height:91px;border:1px solid #ACA899;box-sizing:border-box"></div>
<div class="t" style="left:464px;top:135px;padding:0 2px;background:#ECE9D8;font-size:11px">Обороты шпинделя:</div>
<div class="b" style="left:471px;top:151px;width:91px;height:18px;background:#fff;box-sizing:border-box;border-top:1px solid #ACA899;border-left:1px solid #ACA899;border-right:1px solid #fff;border-bottom:1px solid #fff;box-shadow:inset 1px 1px #716F64"></div>
<svg style="left:512px;top:150px" width="11" height="23" viewBox="0 0 11 23">
<path d="M0.5 0.5 H9.5 V17.5 L5 22 L0.5 17.5 Z" fill="#ECE9D8" stroke="#fff"/>
<path d="M10 0 V18 L5 23" stroke="#716F64" fill="none"/>
<path d="M9 1 V17.5 L5 21.5" stroke="#ACA899" fill="none"/>
</svg>
<div class="b" style="left:476px;top:174px;width:1px;height:4px;background:#000"></div>
<div class="b" style="left:489px;top:174px;width:1px;height:4px;background:#000"></div>
<div class="b" style="left:503px;top:174px;width:1px;height:4px;background:#000"></div>
<div class="b" style="left:516px;top:174px;width:1px;height:4px;background:#000"></div>
<div class="b" style="left:530px;top:174px;width:1px;height:4px;background:#000"></div>
<div class="b" style="left:543px;top:174px;width:1px;height:4px;background:#000"></div>
<div class="b" style="left:556px;top:174px;width:1px;height:4px;background:#000"></div>
<div class="t" style="left:470px;top:187px;font-size:8px;line-height:10px;font-weight:bold;letter-spacing:0.5px">6000</div>
<div class="t" style="left:512px;top:187px;font-size:8px;line-height:10px;font-weight:bold;letter-spacing:0.5px">15000</div>
<div class="t" style="left:557px;top:187px;font-size:8px;line-height:10px;font-weight:bold;letter-spacing:0.5px">24000</div>
<div class="t" style="left:584px;top:155px;font-size:11px;color:#000;">Setting:</div>
<div class="b" style="left:631px;top:148px;width:44px;height:19px;border:1px solid #000;box-sizing:border-box;box-shadow:inset 1px 1px #fff,inset -1px -1px #fff"></div>
<div class="t" style="right:610px;top:151px;font-size:11px;color:#000;">15000</div>
<div class="t" style="left:586px;top:176px;font-size:11px;color:#000;">Actual:</div>
<div class="t" style="right:609px;top:178px;font-size:11px;color:#000;">15000</div>
<div class="t" style="right:610px;top:199px;font-size:11px;color:#000;">100%</div>
<div class="t" style="left:460px;top:216px;font-size:11px;color:#000;">Шпинделі</div>
<div class="b" style="left:511px;top:210px;width:70px;height:22px;background:#ECE9D8;box-sizing:border-box;border-top:1px solid #fff;border-left:1px solid #fff;border-right:1px solid #716F64;border-bottom:1px solid #716F64;box-shadow:inset -1px -1px #ACA899"></div>
<div class="t" style="left:445px;width:200px;text-align:center;top:215px;font-size:11px;color:#000;letter-spacing:0.6px">квл/выкл</div>
<div class="b" style="left:693px;top:142px;width:134px;height:91px;border:1px solid #fff;box-sizing:border-box"></div>
<div class="b" style="left:692px;top:141px;width:134px;height:91px;border:1px solid #ACA899;box-sizing:border-box"></div>
<div class="t" style="left:699px;top:135px;padding:0 2px;background:#ECE9D8;font-size:11px">Текущий набор команд:</div>
<div class="t" style="left:701px;top:158px;font-size:11px;color:#000;">G54</div>
<div class="b" style="left:1px;top:242px;width:570px;height:1px;background:#ACA899"></div>
<div class="b" style="left:1px;top:242px;width:1px;height:733px;background:#ACA899"></div>
<div class="b" style="left:570px;top:242px;width:1px;height:733px;background:#fff"></div>
<div class="b" style="left:1px;top:974px;width:570px;height:1px;background:#fff"></div>
<svg style="left:2px;top:243px" width="568" height="21" shape-rendering="crispEdges"><rect x="0" y="0" width="568" height="20" fill="#7A96DF"/><path d="M346 3 H406 L422 19 V20 H346 Z" fill="#ECE9D8"/><path d="M347 3.5 H406" stroke="#fff"/><path d="M346.5 3 V19.5" stroke="#ACA899"/><path d="M346 19.5 H423" stroke="#ACA899"/><rect x="406" y="3" width="1" height="1" fill="#ACA899"/><rect x="407" y="4" width="1" height="1" fill="#ACA899"/><rect x="406" y="4" width="1" height="1" fill="#fff" opacity="0.55"/><rect x="408" y="5" width="1" height="1" fill="#ACA899"/><rect x="407" y="5" width="1" height="1" fill="#fff" opacity="0.55"/><rect x="409" y="6" width="1" height="1" fill="#ACA899"/><rect x="408" y="6" width="1" height="1" fill="#fff" opacity="0.55"/><rect x="410" y="7" width="1" height="1" fill="#ACA899"/><rect x="409" y="7" width="1" height="1" fill="#fff" opacity="0.55"/><rect x="411" y="8" width="1" height="1" fill="#ACA899"/><rect x="410" y="8" width="1" height="1" fill="#fff" opacity="0.55"/><rect x="412" y="9" width="1" height="1" fill="#ACA899"/><rect x="411" y="9" width="1" height="1" fill="#fff" opacity="0.55"/><rect x="413" y="10" width="1" height="1" fill="#ACA899"/><rect x="412" y="10" width="1" height="1" fill="#fff" opacity="0.55"/><rect x="414" y="11" width="1" height="1" fill="#ACA899"/><rect x="413" y="11" width="1" height="1" fill="#fff" opacity="0.55"/><rect x="415" y="12" width="1" height="1" fill="#ACA899"/><rect x="414" y="12" width="1" height="1" fill="#fff" opacity="0.55"/><rect x="416" y="13" width="1" height="1" fill="#ACA899"/><rect x="415" y="13" width="1" height="1" fill="#fff" opacity="0.55"/><rect x="417" y="14" width="1" height="1" fill="#ACA899"/><rect x="416" y="14" width="1" height="1" fill="#fff" opacity="0.55"/><rect x="418" y="15" width="1" height="1" fill="#ACA899"/><rect x="417" y="15" width="1" height="1" fill="#fff" opacity="0.55"/><rect x="419" y="16" width="1" height="1" fill="#ACA899"/><rect x="418" y="16" width="1" height="1" fill="#fff" opacity="0.55"/><rect x="420" y="17" width="1" height="1" fill="#ACA899"/><rect x="419" y="17" width="1" height="1" fill="#fff" opacity="0.55"/><rect x="421" y="18" width="1" height="1" fill="#ACA899"/><rect x="420" y="18" width="1" height="1" fill="#fff" opacity="0.55"/><rect x="422" y="19" width="1" height="1" fill="#ACA899"/><path d="M278 3 H338 L354 19 V20 H278 Z" fill="#ECE9D8"/><path d="M279 3.5 H338" stroke="#fff"/><path d="M278.5 3 V19.5" stroke="#ACA899"/><path d="M278 19.5 H355" stroke="#ACA899"/><rect x="338" y="3" width="1" height="1" fill="#ACA899"/><rect x="339" y="4" width="1" height="1" fill="#ACA899"/><rect x="338" y="4" width="1" height="1" fill="#fff" opacity="0.55"/><rect x="340" y="5" width="1" height="1" fill="#ACA899"/><rect x="339" y="5" width="1" height="1" fill="#fff" opacity="0.55"/><rect x="341" y="6" width="1" height="1" fill="#ACA899"/><rect x="340" y="6" width="1" height="1" fill="#fff" opacity="0.55"/><rect x="342" y="7" width="1" height="1" fill="#ACA899"/><rect x="341" y="7" width="1" height="1" fill="#fff" opacity="0.55"/><rect x="343" y="8" width="1" height="1" fill="#ACA899"/><rect x="342" y="8" width="1" height="1" fill="#fff" opacity="0.55"/><rect x="344" y="9" width="1" height="1" fill="#ACA899"/><rect x="343" y="9" width="1" height="1" fill="#fff" opacity="0.55"/><rect x="345" y="10" width="1" height="1" fill="#ACA899"/><rect x="344" y="10" width="1" height="1" fill="#fff" opacity="0.55"/><rect x="346" y="11" width="1" height="1" fill="#ACA899"/><rect x="345" y="11" width="1" height="1" fill="#fff" opacity="0.55"/><rect x="347" y="12" width="1" height="1" fill="#ACA899"/><rect x="346" y="12" width="1" height="1" fill="#fff" opacity="0.55"/><rect x="348" y="13" width="1" height="1" fill="#ACA899"/><rect x="347" y="13" width="1" height="1" fill="#fff" opacity="0.55"/><rect x="349" y="14" width="1" height="1" fill="#ACA899"/><rect x="348" y="14" width="1" height="1" fill="#fff" opacity="0.55"/><rect x="350" y="15" width="1" height="1" fill="#ACA899"/><rect x="349" y="15" width="1" height="1" fill="#fff" opacity="0.55"/><rect x="351" y="16" width="1" height="1" fill="#ACA899"/><rect x="350" y="16" width="1" height="1" fill="#fff" opacity="0.55"/><rect x="352" y="17" width="1" height="1" fill="#ACA899"/><rect x="351" y="17" width="1" height="1" fill="#fff" opacity="0.55"/><rect x="353" y="18" width="1" height="1" fill="#ACA899"/><rect x="352" y="18" width="1" height="1" fill="#fff" opacity="0.55"/><rect x="354" y="19" width="1" height="1" fill="#ACA899"/><path d="M142 3 H202 L218 19 V20 H142 Z" fill="#ECE9D8"/><path d="M143 3.5 H202" stroke="#fff"/><path d="M142.5 3 V19.5" stroke="#ACA899"/><path d="M142 19.5 H219" stroke="#ACA899"/><rect x="202" y="3" width="1" height="1" fill="#ACA899"/><rect x="203" y="4" width="1" height="1" fill="#ACA899"/><rect x="202" y="4" width="1" height="1" fill="#fff" opacity="0.55"/><rect x="204" y="5" width="1" height="1" fill="#ACA899"/><rect x="203" y="5" width="1" height="1" fill="#fff" opacity="0.55"/><rect x="205" y="6" width="1" height="1" fill="#ACA899"/><rect x="204" y="6" width="1" height="1" fill="#fff" opacity="0.55"/><rect x="206" y="7" width="1" height="1" fill="#ACA899"/><rect x="205" y="7" width="1" height="1" fill="#fff" opacity="0.55"/><rect x="207" y="8" width="1" height="1" fill="#ACA899"/><rect x="206" y="8" width="1" height="1" fill="#fff" opacity="0.55"/><rect x="208" y="9" width="1" height="1" fill="#ACA899"/><rect x="207" y="9" width="1" height="1" fill="#fff" opacity="0.55"/><rect x="209" y="10" width="1" height="1" fill="#ACA899"/><rect x="208" y="10" width="1" height="1" fill="#fff" opacity="0.55"/><rect x="210" y="11" width="1" height="1" fill="#ACA899"/><rect x="209" y="11" width="1" height="1" fill="#fff" opacity="0.55"/><rect x="211" y="12" width="1" height="1" fill="#ACA899"/><rect x="210" y="12" width="1" height="1" fill="#fff" opacity="0.55"/><rect x="212" y="13" width="1" height="1" fill="#ACA899"/><rect x="211" y="13" width="1" height="1" fill="#fff" opacity="0.55"/><rect x="213" y="14" width="1" height="1" fill="#ACA899"/><rect x="212" y="14" width="1" height="1" fill="#fff" opacity="0.55"/><rect x="214" y="15" width="1" height="1" fill="#ACA899"/><rect x="213" y="15" width="1" height="1" fill="#fff" opacity="0.55"/><rect x="215" y="16" width="1" height="1" fill="#ACA899"/><rect x="214" y="16" width="1" height="1" fill="#fff" opacity="0.55"/><rect x="216" y="17" width="1" height="1" fill="#ACA899"/><rect x="215" y="17" width="1" height="1" fill="#fff" opacity="0.55"/><rect x="217" y="18" width="1" height="1" fill="#ACA899"/><rect x="216" y="18" width="1" height="1" fill="#fff" opacity="0.55"/><rect x="218" y="19" width="1" height="1" fill="#ACA899"/><path d="M74 3 H134 L150 19 V20 H74 Z" fill="#ECE9D8"/><path d="M75 3.5 H134" stroke="#fff"/><path d="M74.5 3 V19.5" stroke="#ACA899"/><path d="M74 19.5 H151" stroke="#ACA899"/><rect x="134" y="3" width="1" height="1" fill="#ACA899"/><rect x="135" y="4" width="1" height="1" fill="#ACA899"/><rect x="134" y="4" width="1" height="1" fill="#fff" opacity="0.55"/><rect x="136" y="5" width="1" height="1" fill="#ACA899"/><rect x="135" y="5" width="1" height="1" fill="#fff" opacity="0.55"/><rect x="137" y="6" width="1" height="1" fill="#ACA899"/><rect x="136" y="6" width="1" height="1" fill="#fff" opacity="0.55"/><rect x="138" y="7" width="1" height="1" fill="#ACA899"/><rect x="137" y="7" width="1" height="1" fill="#fff" opacity="0.55"/><rect x="139" y="8" width="1" height="1" fill="#ACA899"/><rect x="138" y="8" width="1" height="1" fill="#fff" opacity="0.55"/><rect x="140" y="9" width="1" height="1" fill="#ACA899"/><rect x="139" y="9" width="1" height="1" fill="#fff" opacity="0.55"/><rect x="141" y="10" width="1" height="1" fill="#ACA899"/><rect x="140" y="10" width="1" height="1" fill="#fff" opacity="0.55"/><rect x="142" y="11" width="1" height="1" fill="#ACA899"/><rect x="141" y="11" width="1" height="1" fill="#fff" opacity="0.55"/><rect x="143" y="12" width="1" height="1" fill="#ACA899"/><rect x="142" y="12" width="1" height="1" fill="#fff" opacity="0.55"/><rect x="144" y="13" width="1" height="1" fill="#ACA899"/><rect x="143" y="13" width="1" height="1" fill="#fff" opacity="0.55"/><rect x="145" y="14" width="1" height="1" fill="#ACA899"/><rect x="144" y="14" width="1" height="1" fill="#fff" opacity="0.55"/><rect x="146" y="15" width="1" height="1" fill="#ACA899"/><rect x="145" y="15" width="1" height="1" fill="#fff" opacity="0.55"/><rect x="147" y="16" width="1" height="1" fill="#ACA899"/><rect x="146" y="16" width="1" height="1" fill="#fff" opacity="0.55"/><rect x="148" y="17" width="1" height="1" fill="#ACA899"/><rect x="147" y="17" width="1" height="1" fill="#fff" opacity="0.55"/><rect x="149" y="18" width="1" height="1" fill="#ACA899"/><rect x="148" y="18" width="1" height="1" fill="#fff" opacity="0.55"/><rect x="150" y="19" width="1" height="1" fill="#ACA899"/><path d="M6 3 H66 L82 19 V20 H6 Z" fill="#ECE9D8"/><path d="M7 3.5 H66" stroke="#fff"/><path d="M6.5 3 V19.5" stroke="#ACA899"/><path d="M6 19.5 H83" stroke="#ACA899"/><rect x="66" y="3" width="1" height="1" fill="#ACA899"/><rect x="67" y="4" width="1" height="1" fill="#ACA899"/><rect x="66" y="4" width="1" height="1" fill="#fff" opacity="0.55"/><rect x="68" y="5" width="1" height="1" fill="#ACA899"/><rect x="67" y="5" width="1" height="1" fill="#fff" opacity="0.55"/><rect x="69" y="6" width="1" height="1" fill="#ACA899"/><rect x="68" y="6" width="1" height="1" fill="#fff" opacity="0.55"/><rect x="70" y="7" width="1" height="1" fill="#ACA899"/><rect x="69" y="7" width="1" height="1" fill="#fff" opacity="0.55"/><rect x="71" y="8" width="1" height="1" fill="#ACA899"/><rect x="70" y="8" width="1" height="1" fill="#fff" opacity="0.55"/><rect x="72" y="9" width="1" height="1" fill="#ACA899"/><rect x="71" y="9" width="1" height="1" fill="#fff" opacity="0.55"/><rect x="73" y="10" width="1" height="1" fill="#ACA899"/><rect x="72" y="10" width="1" height="1" fill="#fff" opacity="0.55"/><rect x="74" y="11" width="1" height="1" fill="#ACA899"/><rect x="73" y="11" width="1" height="1" fill="#fff" opacity="0.55"/><rect x="75" y="12" width="1" height="1" fill="#ACA899"/><rect x="74" y="12" width="1" height="1" fill="#fff" opacity="0.55"/><rect x="76" y="13" width="1" height="1" fill="#ACA899"/><rect x="75" y="13" width="1" height="1" fill="#fff" opacity="0.55"/><rect x="77" y="14" width="1" height="1" fill="#ACA899"/><rect x="76" y="14" width="1" height="1" fill="#fff" opacity="0.55"/><rect x="78" y="15" width="1" height="1" fill="#ACA899"/><rect x="77" y="15" width="1" height="1" fill="#fff" opacity="0.55"/><rect x="79" y="16" width="1" height="1" fill="#ACA899"/><rect x="78" y="16" width="1" height="1" fill="#fff" opacity="0.55"/><rect x="80" y="17" width="1" height="1" fill="#ACA899"/><rect x="79" y="17" width="1" height="1" fill="#fff" opacity="0.55"/><rect x="81" y="18" width="1" height="1" fill="#ACA899"/><rect x="80" y="18" width="1" height="1" fill="#fff" opacity="0.55"/><rect x="82" y="19" width="1" height="1" fill="#ACA899"/><path d="M210 3 H270 L286 19 V20 H210 Z" fill="#ECE9D8"/><path d="M211 3.5 H270" stroke="#fff"/><path d="M210.5 3 V21" stroke="#fff"/><rect x="270" y="3" width="1" height="1" fill="#ACA899"/><rect x="271" y="4" width="1" height="1" fill="#ACA899"/><rect x="270" y="4" width="1" height="1" fill="#fff" opacity="0.55"/><rect x="272" y="5" width="1" height="1" fill="#ACA899"/><rect x="271" y="5" width="1" height="1" fill="#fff" opacity="0.55"/><rect x="273" y="6" width="1" height="1" fill="#ACA899"/><rect x="272" y="6" width="1" height="1" fill="#fff" opacity="0.55"/><rect x="274" y="7" width="1" height="1" fill="#ACA899"/><rect x="273" y="7" width="1" height="1" fill="#fff" opacity="0.55"/><rect x="275" y="8" width="1" height="1" fill="#ACA899"/><rect x="274" y="8" width="1" height="1" fill="#fff" opacity="0.55"/><rect x="276" y="9" width="1" height="1" fill="#ACA899"/><rect x="275" y="9" width="1" height="1" fill="#fff" opacity="0.55"/><rect x="277" y="10" width="1" height="1" fill="#ACA899"/><rect x="276" y="10" width="1" height="1" fill="#fff" opacity="0.55"/><rect x="278" y="11" width="1" height="1" fill="#ACA899"/><rect x="277" y="11" width="1" height="1" fill="#fff" opacity="0.55"/><rect x="279" y="12" width="1" height="1" fill="#ACA899"/><rect x="278" y="12" width="1" height="1" fill="#fff" opacity="0.55"/><rect x="280" y="13" width="1" height="1" fill="#ACA899"/><rect x="279" y="13" width="1" height="1" fill="#fff" opacity="0.55"/><rect x="281" y="14" width="1" height="1" fill="#ACA899"/><rect x="280" y="14" width="1" height="1" fill="#fff" opacity="0.55"/><rect x="282" y="15" width="1" height="1" fill="#ACA899"/><rect x="281" y="15" width="1" height="1" fill="#fff" opacity="0.55"/><rect x="283" y="16" width="1" height="1" fill="#ACA899"/><rect x="282" y="16" width="1" height="1" fill="#fff" opacity="0.55"/><rect x="284" y="17" width="1" height="1" fill="#ACA899"/><rect x="283" y="17" width="1" height="1" fill="#fff" opacity="0.55"/><rect x="285" y="18" width="1" height="1" fill="#ACA899"/><rect x="284" y="18" width="1" height="1" fill="#fff" opacity="0.55"/><rect x="286" y="19" width="1" height="1" fill="#ACA899"/></svg>
<div class="t" style="left:17px;top:248px;font-size:11px;color:#ACA899;">Trace</div>
<div class="t" style="left:85px;top:248px;font-size:11px;color:#ACA899;">Log</div>
<div class="t" style="left:152px;top:248px;font-size:11px;color:#ACA899;">Manager</div>
<div class="t" style="left:221px;top:248px;font-size:11px;color:#000;">Params</div>
<div class="t" style="left:288px;top:248px;font-size:11px;color:#ACA899;">Editor</div>
<div class="t" style="left:356px;top:248px;font-size:11px;color:#ACA899;">IOState</div>
<div class="b" style="left:2px;top:263px;width:210px;height:1px;background:#fff"></div>
<div class="b" style="left:288px;top:263px;width:282px;height:1px;background:#fff"></div>
<div class="b" style="left:211px;top:263px;width:1px;height:1px;background:#fff"></div>
<div class="b" style="left:575px;top:241px;width:704px;height:734px;border:1px solid #ACA899;box-sizing:border-box"></div>
<div class="b" style="left:576px;top:242px;width:1px;height:732px;background:#fff"></div>
<div class="b" style="left:576px;top:242px;width:702px;height:1px;background:#fff"></div>
<div class="b" style="left:575px;top:975px;width:705px;height:1px;background:#fff"></div>
<div class="b" style="left:1279px;top:241px;width:1px;height:735px;background:#fff"></div>
<svg style="left:577px;top:243px" width="701" height="21" shape-rendering="crispEdges"><rect x="0" y="0" width="701" height="20" fill="#0054E3"/><path d="M6 3 H46 L62 19 V20 H6 Z" fill="#ECE9D8"/><path d="M7 3.5 H46" stroke="#fff"/><path d="M6.5 3 V19.5" stroke="#ACA899"/><path d="M6 19.5 H63" stroke="#ACA899"/><rect x="46" y="3" width="1" height="1" fill="#ACA899"/><rect x="47" y="4" width="1" height="1" fill="#ACA899"/><rect x="46" y="4" width="1" height="1" fill="#fff" opacity="0.55"/><rect x="48" y="5" width="1" height="1" fill="#ACA899"/><rect x="47" y="5" width="1" height="1" fill="#fff" opacity="0.55"/><rect x="49" y="6" width="1" height="1" fill="#ACA899"/><rect x="48" y="6" width="1" height="1" fill="#fff" opacity="0.55"/><rect x="50" y="7" width="1" height="1" fill="#ACA899"/><rect x="49" y="7" width="1" height="1" fill="#fff" opacity="0.55"/><rect x="51" y="8" width="1" height="1" fill="#ACA899"/><rect x="50" y="8" width="1" height="1" fill="#fff" opacity="0.55"/><rect x="52" y="9" width="1" height="1" fill="#ACA899"/><rect x="51" y="9" width="1" height="1" fill="#fff" opacity="0.55"/><rect x="53" y="10" width="1" height="1" fill="#ACA899"/><rect x="52" y="10" width="1" height="1" fill="#fff" opacity="0.55"/><rect x="54" y="11" width="1" height="1" fill="#ACA899"/><rect x="53" y="11" width="1" height="1" fill="#fff" opacity="0.55"/><rect x="55" y="12" width="1" height="1" fill="#ACA899"/><rect x="54" y="12" width="1" height="1" fill="#fff" opacity="0.55"/><rect x="56" y="13" width="1" height="1" fill="#ACA899"/><rect x="55" y="13" width="1" height="1" fill="#fff" opacity="0.55"/><rect x="57" y="14" width="1" height="1" fill="#ACA899"/><rect x="56" y="14" width="1" height="1" fill="#fff" opacity="0.55"/><rect x="58" y="15" width="1" height="1" fill="#ACA899"/><rect x="57" y="15" width="1" height="1" fill="#fff" opacity="0.55"/><rect x="59" y="16" width="1" height="1" fill="#ACA899"/><rect x="58" y="16" width="1" height="1" fill="#fff" opacity="0.55"/><rect x="60" y="17" width="1" height="1" fill="#ACA899"/><rect x="59" y="17" width="1" height="1" fill="#fff" opacity="0.55"/><rect x="61" y="18" width="1" height="1" fill="#ACA899"/><rect x="60" y="18" width="1" height="1" fill="#fff" opacity="0.55"/><rect x="62" y="19" width="1" height="1" fill="#ACA899"/><path d="M54 3 H94 L110 19 V20 H54 Z" fill="#ECE9D8"/><path d="M55 3.5 H94" stroke="#fff"/><path d="M54.5 3 V21" stroke="#fff"/><rect x="94" y="3" width="1" height="1" fill="#ACA899"/><rect x="95" y="4" width="1" height="1" fill="#ACA899"/><rect x="94" y="4" width="1" height="1" fill="#fff" opacity="0.55"/><rect x="96" y="5" width="1" height="1" fill="#ACA899"/><rect x="95" y="5" width="1" height="1" fill="#fff" opacity="0.55"/><rect x="97" y="6" width="1" height="1" fill="#ACA899"/><rect x="96" y="6" width="1" height="1" fill="#fff" opacity="0.55"/><rect x="98" y="7" width="1" height="1" fill="#ACA899"/><rect x="97" y="7" width="1" height="1" fill="#fff" opacity="0.55"/><rect x="99" y="8" width="1" height="1" fill="#ACA899"/><rect x="98" y="8" width="1" height="1" fill="#fff" opacity="0.55"/><rect x="100" y="9" width="1" height="1" fill="#ACA899"/><rect x="99" y="9" width="1" height="1" fill="#fff" opacity="0.55"/><rect x="101" y="10" width="1" height="1" fill="#ACA899"/><rect x="100" y="10" width="1" height="1" fill="#fff" opacity="0.55"/><rect x="102" y="11" width="1" height="1" fill="#ACA899"/><rect x="101" y="11" width="1" height="1" fill="#fff" opacity="0.55"/><rect x="103" y="12" width="1" height="1" fill="#ACA899"/><rect x="102" y="12" width="1" height="1" fill="#fff" opacity="0.55"/><rect x="104" y="13" width="1" height="1" fill="#ACA899"/><rect x="103" y="13" width="1" height="1" fill="#fff" opacity="0.55"/><rect x="105" y="14" width="1" height="1" fill="#ACA899"/><rect x="104" y="14" width="1" height="1" fill="#fff" opacity="0.55"/><rect x="106" y="15" width="1" height="1" fill="#ACA899"/><rect x="105" y="15" width="1" height="1" fill="#fff" opacity="0.55"/><rect x="107" y="16" width="1" height="1" fill="#ACA899"/><rect x="106" y="16" width="1" height="1" fill="#fff" opacity="0.55"/><rect x="108" y="17" width="1" height="1" fill="#ACA899"/><rect x="107" y="17" width="1" height="1" fill="#fff" opacity="0.55"/><rect x="109" y="18" width="1" height="1" fill="#ACA899"/><rect x="108" y="18" width="1" height="1" fill="#fff" opacity="0.55"/><rect x="110" y="19" width="1" height="1" fill="#ACA899"/></svg>
<div class="t" style="left:591px;top:248px;font-size:11px;color:#ACA899;">AUTO</div>
<div class="t" style="left:640px;top:248px;font-size:11px;color:#000;">MA...</div>
<div class="b" style="left:577px;top:263px;width:54px;height:1px;background:#fff"></div>
<div class="b" style="left:687px;top:263px;width:591px;height:1px;background:#fff"></div>
<div class="b" style="left:10px;top:296px;width:81px;height:26px;border:1px solid #000;box-sizing:border-box;background:#ECE9D8;box-shadow:inset 1px 1px #fff,inset -1px -1px #fff"></div>
<div class="t" style="left:26px;top:302px;font-size:11px;color:#000;letter-spacing:-0.3px"><u>M</u>achining</div>
<div class="b" style="left:11px;top:346px;width:81px;height:26px;border:1px solid #000;box-sizing:border-box;background:repeating-conic-gradient(#FFFFFF 0 25%,#ECE9D8 0 50%) 0 0/2px 2px;box-shadow:inset 1px 1px #fff,inset -1px -1px #fff"></div>
<div class="t" style="left:21px;top:352px;font-size:11px;color:#000;">M<u>a</u>nufactory</div>
<div class="b" style="left:100px;top:272px;width:1px;height:694px;background:#ACA899"></div>
<div class="b" style="left:101px;top:272px;width:1px;height:694px;background:#ACA899"></div>
<div class="t" style="left:120px;top:277px;font-size:11px;color:#000;">Рабочие параметры</div>
<div class="b" style="left:250px;top:281px;width:231px;height:1px;background:#ACA899"></div>
<div class="b" style="left:250px;top:282px;width:231px;height:1px;background:#fff"></div>
<div class="t" style="left:137px;top:301px;font-size:11px;color:#000;">Установка рабочих папарметров , обеспечивающих</div>
<div class="t" style="left:136px;top:315px;font-size:11px;color:#000;">эффективную работу станка (рабочее поле, точность, скорость)</div>
<div class="b" style="left:150px;top:366px;width:159px;height:122px;border:1px solid #fff;box-sizing:border-box"></div>
<div class="b" style="left:149px;top:365px;width:159px;height:122px;border:1px solid #ACA899;box-sizing:border-box"></div>
<div class="t" style="left:156px;top:359px;padding:0 2px;background:#ECE9D8;font-size:11px">Старт (Мех-кие) координаты.</div>
<div class="b" style="left:312px;top:366px;width:162px;height:122px;border:1px solid #fff;box-sizing:border-box"></div>
<div class="b" style="left:311px;top:365px;width:162px;height:122px;border:1px solid #ACA899;box-sizing:border-box"></div>
<div class="t" style="left:318px;top:359px;padding:0 2px;background:#ECE9D8;font-size:11px">Конечные (Мех-кие) координаты.</div>
<div class="t" style="left:157px;top:383px;font-size:11px;color:#000;">X:</div>
<div class="t" style="left:157px;top:418px;font-size:11px;color:#000;">Y:</div>
<div class="t" style="left:157px;top:453px;font-size:11px;color:#000;">Z:</div>
<div class="b" style="left:202px;top:379px;width:68px;height:21px;background:#fff;border-top:1px solid #ACA899;border-left:1px solid #ACA899;box-sizing:border-box"></div>
<div class="t" style="left:206px;top:381px;font-size:11px;color:#000;">0</div>
<div class="b" style="left:202px;top:414px;width:68px;height:21px;background:#fff;border-top:1px solid #ACA899;border-left:1px solid #ACA899;box-sizing:border-box"></div>
<div class="t" style="left:206px;top:416px;font-size:11px;color:#000;">0</div>
<div class="b" style="left:202px;top:449px;width:68px;height:21px;background:#fff;border-top:1px solid #ACA899;border-left:1px solid #ACA899;box-sizing:border-box"></div>
<div class="t" style="left:206px;top:451px;font-size:11px;color:#000;">0</div>
<div class="t" style="left:275px;top:384px;font-size:11px;color:#000;">мм</div>
<div class="t" style="left:275px;top:422px;font-size:11px;color:#000;">мм</div>
<div class="t" style="left:275px;top:457px;font-size:11px;color:#000;">мм</div>
<div class="t" style="left:329px;top:383px;font-size:11px;color:#000;">X:</div>
<div class="t" style="left:329px;top:418px;font-size:11px;color:#000;">Y:</div>
<div class="t" style="left:329px;top:453px;font-size:11px;color:#000;">Z:</div>
<div class="b" style="left:374px;top:379px;width:68px;height:21px;background:#fff;border-top:1px solid #ACA899;border-left:1px solid #ACA899;box-sizing:border-box"></div>
<div class="t" style="left:378px;top:381px;font-size:11px;color:#000;">580</div>
<div class="b" style="left:374px;top:414px;width:68px;height:21px;background:#fff;border-top:1px solid #ACA899;border-left:1px solid #ACA899;box-sizing:border-box"></div>
<div class="t" style="left:378px;top:416px;font-size:11px;color:#000;">880</div>
<div class="b" style="left:374px;top:449px;width:68px;height:21px;background:#fff;border-top:1px solid #ACA899;border-left:1px solid #ACA899;box-sizing:border-box"></div>
<div class="t" style="left:378px;top:451px;font-size:11px;color:#000;">190</div>
<div class="t" style="left:448px;top:387px;font-size:11px;color:#000;">мм</div>
<div class="t" style="left:448px;top:418px;font-size:11px;color:#000;">мм</div>
<div class="t" style="left:448px;top:453px;font-size:11px;color:#000;">мм</div>
<div class="b" style="left:472px;top:386px;width:3px;height:14px;background:#ECE9D8"></div>
<div class="b" style="left:472px;top:419px;width:3px;height:13px;background:#ECE9D8"></div>
<div class="b" style="left:472px;top:453px;width:3px;height:13px;background:#ECE9D8"></div>
<div class="t" style="left:115px;top:497px;font-size:11px;color:#000;">Примечание: Перезагрузите программу после&nbsp; изменения&nbsp; параметров.</div>
<div class="t" style="left:110px;top:523px;font-size:11px;color:#000;">Колибратор</div>
<div class="b" style="left:185px;top:529px;width:294px;height:1px;background:#ACA899"></div>
<div class="b" style="left:185px;top:530px;width:294px;height:1px;background:#fff"></div>
<div class="t" style="left:178px;top:543px;font-size:11px;color:#000;">Толщина:</div>
<div class="b" style="left:239px;top:538px;width:78px;height:21px;background:#fff;border-top:1px solid #ACA899;border-left:1px solid #ACA899;box-sizing:border-box"></div>
<div class="t" style="left:243px;top:540px;font-size:11px;color:#000;">19.05</div>
<div class="t" style="left:322px;top:543px;font-size:11px;color:#000;">мм</div>
<div class="t" style="left:115px;top:576px;font-size:11px;color:#000;">Мотор</div>
<div class="b" style="left:155px;top:582px;width:327px;height:1px;background:#ACA899"></div>
<div class="b" style="left:155px;top:583px;width:327px;height:1px;background:#fff"></div>
<div class="b" style="left:205px;top:584px;width:1px;height:4px;background:#000"></div>
<div class="t" style="left:153px;top:599px;font-size:11px;color:#000;">X:</div>
<div class="t" style="left:154px;top:641px;font-size:11px;color:#000;">Y:</div>
<div class="t" style="left:153px;top:681px;font-size:11px;color:#000;">Z:</div>
<div class="b" style="left:182px;top:592px;width:81px;height:21px;background:#fff;border-top:1px solid #ACA899;border-left:1px solid #ACA899;box-sizing:border-box"></div>
<div class="t" style="left:185px;top:593px;font-size:11px;color:#000;">0.0125</div>
<div class="b" style="left:182px;top:634px;width:81px;height:21px;background:#fff;border-top:1px solid #ACA899;border-left:1px solid #ACA899;box-sizing:border-box"></div>
<div class="t" style="left:185px;top:635px;font-size:11px;color:#000;">0.0125</div>
<div class="b" style="left:182px;top:675px;width:81px;height:21px;background:#fff;border-top:1px solid #ACA899;border-left:1px solid #ACA899;box-sizing:border-box"></div>
<div class="t" style="left:185px;top:677px;font-size:11px;color:#000;">0.0125</div>
<div class="t" style="left:271px;top:599px;width:61px;overflow:hidden">мм/импульс</div>
<div class="t" style="left:271px;top:641px;width:61px;overflow:hidden">мм/импульс</div>
<div class="t" style="left:271px;top:681px;width:61px;overflow:hidden">мм/импульс</div>
<div class="b" style="left:333px;top:593px;width:155px;height:109px;border:1px solid #fff;box-sizing:border-box"></div>
<div class="b" style="left:332px;top:592px;width:155px;height:109px;border:1px solid #ACA899;box-sizing:border-box"></div>
<div class="t" style="left:349px;top:597px;font-size:11px;color:#000;">Стартовая подача:</div>
<div class="b" style="left:364px;top:617px;width:60px;height:21px;background:#fff;border-top:1px solid #ACA899;border-left:1px solid #ACA899;box-sizing:border-box"></div>
<div class="t" style="left:368px;top:619px;font-size:11px;color:#000;">7000</div>
<div class="t" style="left:430px;top:621px;font-size:11px;color:#000;">мм/мин</div>
<div class="t" style="left:339px;top:656px;font-size:11px;color:#000;letter-spacing:0.13px">Увеличивает максимальное</div>
<div class="b" style="left:362px;top:675px;width:60px;height:21px;background:#fff;border-top:1px solid #ACA899;border-left:1px solid #ACA899;box-sizing:border-box"></div>
<div class="t" style="left:366px;top:677px;font-size:11px;color:#000;">7000</div>
<div class="t" style="left:428px;top:679px;font-size:11px;color:#000;">мм/мин</div>
<div class="t" style="left:111px;top:717px;font-size:11px;color:#000;">Ускорение</div>
<div class="b" style="left:178px;top:724px;width:306px;height:1px;background:#ACA899"></div>
<div class="b" style="left:178px;top:725px;width:306px;height:1px;background:#fff"></div>
<div class="t" style="left:118px;top:738px;font-size:11px;color:#000;letter-spacing:0.13px">Установить угол-импульса , когда ось Y является осью вращения:</div>
<div class="t" style="left:167px;top:760px;font-size:11px;color:#000;">Линейное ускорение:</div>
<div class="b" style="left:277px;top:755px;width:61px;height:21px;background:#fff;border-top:1px solid #ACA899;border-left:1px solid #ACA899;box-sizing:border-box"></div>
<div class="t" style="left:281px;top:757px;font-size:11px;color:#000;">500</div>
<div class="t" style="left:343px;top:760px;font-size:11px;color:#000;">мм/сек</div>
<div class="t" style="left:387px;top:753px;font-size:11px;color:#000;">2</div>
<div class="t" style="left:145px;top:805px;font-size:11px;color:#000;">Connection Acceleration:</div>
<div class="b" style="left:277px;top:801px;width:61px;height:21px;background:#fff;border-top:1px solid #ACA899;border-left:1px solid #ACA899;box-sizing:border-box"></div>
<div class="t" style="left:281px;top:802px;font-size:11px;color:#000;">500</div>
<div class="t" style="left:343px;top:806px;font-size:11px;color:#000;">мм/сек</div>
<div class="t" style="left:387px;top:799px;font-size:11px;color:#000;">2</div>
<div class="t" style="left:110px;top:828px;width:51px;overflow:hidden">Шпиндель</div>
<div class="b" style="left:164px;top:835px;width:320px;height:1px;background:#ACA899"></div>
<div class="b" style="left:164px;top:836px;width:320px;height:1px;background:#fff"></div>
<div class="t" style="left:132px;top:856px;font-size:11px;color:#000;">Макс. обороты шпинделя:</div>
<div class="b" style="left:277px;top:851px;width:62px;height:21px;background:#fff;border-top:1px solid #ACA899;border-left:1px solid #ACA899;box-sizing:border-box"></div>
<div class="t" style="left:280px;top:852px;font-size:11px;color:#000;">18000</div>
<div class="t" style="left:346px;top:856px;font-size:11px;color:#000;">об/мин</div>
<div class="t" style="left:110px;top:880px;font-size:11px;color:#000;">Задержка старт/стоп шпинделя:</div>
<div class="b" style="left:280px;top:878px;width:61px;height:21px;background:#fff;border-top:1px solid #ACA899;border-left:1px solid #ACA899;box-sizing:border-box"></div>
<div class="t" style="left:284px;top:880px;font-size:11px;color:#000;">5000</div>
<div class="t" style="left:346px;top:882px;font-size:11px;color:#000;">милисекунд</div>
<div class="b" style="left:546px;top:289px;width:16px;height:627px;background:repeating-conic-gradient(#FFFFFF 0 25%,#ECE9D8 0 50%) 0 0/2px 2px"></div>
<div class="b" style="left:546px;top:272px;width:16px;height:17px;background:#ECE9D8;box-sizing:border-box;border-top:1px solid #fff;border-left:1px solid #fff;border-right:1px solid #716F64;border-bottom:1px solid #716F64;box-shadow:inset -1px -1px #ACA899"></div>
<svg style="left:550px;top:278px" width="7" height="4"><path d="M0 4 L3.5 0 L7 4Z" fill="#000"/></svg>
<div class="b" style="left:546px;top:289px;width:16px;height:620px;background:#ECE9D8;box-sizing:border-box;border-top:1px solid #fff;border-left:1px solid #fff;border-right:1px solid #716F64;border-bottom:1px solid #716F64;box-shadow:inset -1px -1px #ACA899"></div>
<div class="b" style="left:546px;top:916px;width:16px;height:17px;background:#ECE9D8;box-sizing:border-box;border-top:1px solid #fff;border-left:1px solid #fff;border-right:1px solid #716F64;border-bottom:1px solid #716F64;box-shadow:inset -1px -1px #ACA899"></div>
<svg style="left:550px;top:923px" width="7" height="4"><path d="M0 0 L3.5 4 L7 0Z" fill="#000"/></svg>
<div class="b" style="left:404px;top:941px;width:76px;height:25px;background:#ECE9D8;box-sizing:border-box;border-top:1px solid #fff;border-left:1px solid #fff;border-right:1px solid #716F64;border-bottom:1px solid #716F64;box-shadow:inset -1px -1px #ACA899"></div>
<div class="b" style="left:487px;top:941px;width:75px;height:25px;background:#ECE9D8;box-sizing:border-box;border-top:1px solid #fff;border-left:1px solid #fff;border-right:1px solid #716F64;border-bottom:1px solid #716F64;box-shadow:inset -1px -1px #ACA899"></div>
<div class="t" style="left:341px;width:200px;text-align:center;top:948px;font-size:11px;color:#ACA899;text-shadow:1px 1px #fff"><u>U</u>ndo</div>
<div class="t" style="left:424px;width:200px;text-align:center;top:948px;font-size:11px;color:#ACA899;text-shadow:1px 1px #fff">A<u>p</u>ply</div>
<div class="b" style="left:587px;top:296px;width:211px;height:292px;border:1px solid #fff;box-sizing:border-box"></div>
<div class="b" style="left:586px;top:295px;width:211px;height:292px;border:1px solid #ACA899;box-sizing:border-box"></div>
<div class="t" style="left:593px;top:290px;padding:0 2px;background:#ECE9D8;font-size:12px">JOG</div>
<div class="b" style="left:665px;top:314px;width:53px;height:56px;background:#ECE9D8;box-sizing:border-box;border-top:1px solid #fff;border-left:1px solid #fff;border-right:1px solid #716F64;border-bottom:1px solid #716F64;box-shadow:inset -1px -1px #ACA899"></div>
<div class="t" style="left:591px;width:200px;text-align:center;top:325px;font-size:11px;color:#000;">Y+</div>
<div class="t" style="left:591px;width:200px;text-align:center;top:340px;font-size:11px;color:#000;">(<u>8</u>)</div>
<div class="b" style="left:728px;top:314px;width:53px;height:56px;background:#ECE9D8;box-sizing:border-box;border-top:1px solid #fff;border-left:1px solid #fff;border-right:1px solid #716F64;border-bottom:1px solid #716F64;box-shadow:inset -1px -1px #ACA899"></div>
<div class="t" style="left:654px;width:200px;text-align:center;top:325px;font-size:11px;color:#000;">Z+</div>
<div class="t" style="left:654px;width:200px;text-align:center;top:340px;font-size:11px;color:#000;">(<u>9</u>)</div>
<div class="b" style="left:602px;top:384px;width:53px;height:56px;background:#ECE9D8;box-sizing:border-box;border-top:1px solid #fff;border-left:1px solid #fff;border-right:1px solid #716F64;border-bottom:1px solid #716F64;box-shadow:inset -1px -1px #ACA899"></div>
<div class="t" style="left:528px;width:200px;text-align:center;top:395px;font-size:11px;color:#000;">X-</div>
<div class="t" style="left:528px;width:200px;text-align:center;top:410px;font-size:11px;color:#000;">(<u>4</u>)</div>
<div class="b" style="left:728px;top:384px;width:53px;height:56px;background:#ECE9D8;box-sizing:border-box;border-top:1px solid #fff;border-left:1px solid #fff;border-right:1px solid #716F64;border-bottom:1px solid #716F64;box-shadow:inset -1px -1px #ACA899"></div>
<div class="t" style="left:654px;width:200px;text-align:center;top:395px;font-size:11px;color:#000;">X+</div>
<div class="t" style="left:654px;width:200px;text-align:center;top:410px;font-size:11px;color:#000;">(<u>6</u>)</div>
<div class="b" style="left:602px;top:453px;width:53px;height:56px;background:#ECE9D8;box-sizing:border-box;border-top:1px solid #fff;border-left:1px solid #fff;border-right:1px solid #716F64;border-bottom:1px solid #716F64;box-shadow:inset -1px -1px #ACA899"></div>
<div class="t" style="left:528px;width:200px;text-align:center;top:464px;font-size:11px;color:#000;">Z-</div>
<div class="t" style="left:528px;width:200px;text-align:center;top:479px;font-size:11px;color:#000;">(<u>1</u>)</div>
<div class="b" style="left:665px;top:453px;width:53px;height:56px;background:#ECE9D8;box-sizing:border-box;border-top:1px solid #fff;border-left:1px solid #fff;border-right:1px solid #716F64;border-bottom:1px solid #716F64;box-shadow:inset -1px -1px #ACA899"></div>
<div class="t" style="left:591px;width:200px;text-align:center;top:464px;font-size:11px;color:#000;">Y-</div>
<div class="t" style="left:591px;width:200px;text-align:center;top:479px;font-size:11px;color:#000;">(<u>2</u>)</div>
<div class="t" style="left:600px;top:526px;font-size:12px;color:#000;">Tip:</div>
<div class="t" style="left:600px;top:541px;font-size:12px;color:#000;">Press TURBO(or CTRL) key to jog</div>
<div class="t" style="left:600px;top:556px;font-size:12px;color:#000;">more rapidly</div>
<svg style="left:804px;top:299px" width="12" height="12" viewBox="0 0 12 12">
<circle cx="6" cy="6" r="4.5" fill="#fff"/>
<path d="M2.111 9.889 A5.5 5.5 0 0 1 9.889 2.111" stroke="#ACA899" stroke-width="1" fill="none"/>
<path d="M9.889 2.111 A5.5 5.5 0 0 1 2.111 9.889" stroke="#fff" stroke-width="1" fill="none"/>
<path d="M2.818 9.182 A4.5 4.5 0 0 1 9.182 2.818" stroke="#716F64" stroke-width="1" fill="none"/>
<path d="M9.182 2.818 A4.5 4.5 0 0 1 2.818 9.182" stroke="#F1EFE2" stroke-width="1" fill="none"/>
<circle cx="6" cy="6" r="1.8" fill="#000"/>
</svg>
<div class="t" style="left:821px;top:299px;font-size:12px;color:#000;"><u>J</u>og</div>
<div class="b" style="left:820px;top:296px;width:23px;height:18px;border:1px dotted #000;box-sizing:border-box"></div>
<svg style="left:804px;top:334px" width="12" height="12" viewBox="0 0 12 12">
<circle cx="6" cy="6" r="4.5" fill="#fff"/>
<path d="M2.111 9.889 A5.5 5.5 0 0 1 9.889 2.111" stroke="#ACA899" stroke-width="1" fill="none"/>
<path d="M9.889 2.111 A5.5 5.5 0 0 1 2.111 9.889" stroke="#fff" stroke-width="1" fill="none"/>
<path d="M2.818 9.182 A4.5 4.5 0 0 1 9.182 2.818" stroke="#716F64" stroke-width="1" fill="none"/>
<path d="M9.182 2.818 A4.5 4.5 0 0 1 2.818 9.182" stroke="#F1EFE2" stroke-width="1" fill="none"/>

</svg>
<div class="t" style="left:821px;top:334px;font-size:12px;color:#000;">0.01mm</div>
<svg style="left:804px;top:370px" width="12" height="12" viewBox="0 0 12 12">
<circle cx="6" cy="6" r="4.5" fill="#fff"/>
<path d="M2.111 9.889 A5.5 5.5 0 0 1 9.889 2.111" stroke="#ACA899" stroke-width="1" fill="none"/>
<path d="M9.889 2.111 A5.5 5.5 0 0 1 2.111 9.889" stroke="#fff" stroke-width="1" fill="none"/>
<path d="M2.818 9.182 A4.5 4.5 0 0 1 9.182 2.818" stroke="#716F64" stroke-width="1" fill="none"/>
<path d="M9.182 2.818 A4.5 4.5 0 0 1 2.818 9.182" stroke="#F1EFE2" stroke-width="1" fill="none"/>

</svg>
<div class="t" style="left:821px;top:370px;font-size:12px;color:#000;">0.05mm</div>
<svg style="left:804px;top:405px" width="12" height="12" viewBox="0 0 12 12">
<circle cx="6" cy="6" r="4.5" fill="#fff"/>
<path d="M2.111 9.889 A5.5 5.5 0 0 1 9.889 2.111" stroke="#ACA899" stroke-width="1" fill="none"/>
<path d="M9.889 2.111 A5.5 5.5 0 0 1 2.111 9.889" stroke="#fff" stroke-width="1" fill="none"/>
<path d="M2.818 9.182 A4.5 4.5 0 0 1 9.182 2.818" stroke="#716F64" stroke-width="1" fill="none"/>
<path d="M9.182 2.818 A4.5 4.5 0 0 1 2.818 9.182" stroke="#F1EFE2" stroke-width="1" fill="none"/>

</svg>
<div class="t" style="left:821px;top:405px;font-size:12px;color:#000;">0.1mm</div>
<svg style="left:804px;top:441px" width="12" height="12" viewBox="0 0 12 12">
<circle cx="6" cy="6" r="4.5" fill="#fff"/>
<path d="M2.111 9.889 A5.5 5.5 0 0 1 9.889 2.111" stroke="#ACA899" stroke-width="1" fill="none"/>
<path d="M9.889 2.111 A5.5 5.5 0 0 1 2.111 9.889" stroke="#fff" stroke-width="1" fill="none"/>
<path d="M2.818 9.182 A4.5 4.5 0 0 1 9.182 2.818" stroke="#716F64" stroke-width="1" fill="none"/>
<path d="M9.182 2.818 A4.5 4.5 0 0 1 2.818 9.182" stroke="#F1EFE2" stroke-width="1" fill="none"/>

</svg>
<div class="t" style="left:821px;top:441px;font-size:12px;color:#000;">0.5mm</div>
<svg style="left:804px;top:476px" width="12" height="12" viewBox="0 0 12 12">
<circle cx="6" cy="6" r="4.5" fill="#fff"/>
<path d="M2.111 9.889 A5.5 5.5 0 0 1 9.889 2.111" stroke="#ACA899" stroke-width="1" fill="none"/>
<path d="M9.889 2.111 A5.5 5.5 0 0 1 2.111 9.889" stroke="#fff" stroke-width="1" fill="none"/>
<path d="M2.818 9.182 A4.5 4.5 0 0 1 9.182 2.818" stroke="#716F64" stroke-width="1" fill="none"/>
<path d="M9.182 2.818 A4.5 4.5 0 0 1 2.818 9.182" stroke="#F1EFE2" stroke-width="1" fill="none"/>

</svg>
<div class="t" style="left:821px;top:476px;font-size:12px;color:#000;">1mm</div>
<svg style="left:804px;top:512px" width="12" height="12" viewBox="0 0 12 12">
<circle cx="6" cy="6" r="4.5" fill="#fff"/>
<path d="M2.111 9.889 A5.5 5.5 0 0 1 9.889 2.111" stroke="#ACA899" stroke-width="1" fill="none"/>
<path d="M9.889 2.111 A5.5 5.5 0 0 1 2.111 9.889" stroke="#fff" stroke-width="1" fill="none"/>
<path d="M2.818 9.182 A4.5 4.5 0 0 1 9.182 2.818" stroke="#716F64" stroke-width="1" fill="none"/>
<path d="M9.182 2.818 A4.5 4.5 0 0 1 2.818 9.182" stroke="#F1EFE2" stroke-width="1" fill="none"/>

</svg>
<div class="t" style="left:821px;top:512px;font-size:12px;color:#000;">5mm</div>
<svg style="left:804px;top:548px" width="12" height="12" viewBox="0 0 12 12">
<circle cx="6" cy="6" r="4.5" fill="#fff"/>
<path d="M2.111 9.889 A5.5 5.5 0 0 1 9.889 2.111" stroke="#ACA899" stroke-width="1" fill="none"/>
<path d="M9.889 2.111 A5.5 5.5 0 0 1 2.111 9.889" stroke="#fff" stroke-width="1" fill="none"/>
<path d="M2.818 9.182 A4.5 4.5 0 0 1 9.182 2.818" stroke="#716F64" stroke-width="1" fill="none"/>
<path d="M9.182 2.818 A4.5 4.5 0 0 1 2.818 9.182" stroke="#F1EFE2" stroke-width="1" fill="none"/>

</svg>
<div class="t" style="left:821px;top:548px;font-size:12px;color:#000;">10mm</div>
<div class="t" style="left:2px;top:980px;font-size:11px;color:#000;">Ready</div>
<div class="b" style="left:1051px;top:978px;width:74px;height:16px;box-sizing:border-box;border-top:1px solid #ACA899;border-left:1px solid #ACA899;border-right:1px solid #fff;border-bottom:1px solid #fff"></div>
<div class="b" style="left:1127px;top:978px;width:62px;height:16px;box-sizing:border-box;border-top:1px solid #ACA899;border-left:1px solid #ACA899;border-right:1px solid #fff;border-bottom:1px solid #fff"></div>
<div class="b" style="left:1191px;top:978px;width:26px;height:16px;box-sizing:border-box;border-top:1px solid #ACA899;border-left:1px solid #ACA899;border-right:1px solid #fff;border-bottom:1px solid #fff"></div>
<div class="b" style="left:1219px;top:978px;width:28px;height:16px;box-sizing:border-box;border-top:1px solid #ACA899;border-left:1px solid #ACA899;border-right:1px solid #fff;border-bottom:1px solid #fff"></div>
<div class="b" style="left:1249px;top:978px;width:31px;height:16px;box-sizing:border-box;border-top:1px solid #ACA899;border-left:1px solid #ACA899;border-right:1px solid #fff;border-bottom:1px solid #fff"></div>
<div class="t" style="left:1056px;top:980px;font-size:11px;color:#000;">2005-02-11</div>
<div class="t" style="left:1132px;top:980px;font-size:11px;color:#000;">16:41:08</div>
<div class="t" style="left:1221px;top:980px;font-size:11px;color:#000;">NUM</div>
<div class="b" style="left:0;top:994px;width:1280px;height:30px;background:linear-gradient(to bottom,#3168D5 0,#4993E6 1px,#2D70E0 3px,#245EDB 6px,#2359D8 20px,#2055CF 27px,#1941A5 30px)"></div>
<div class="b" style="left:0;top:994px;width:96px;height:30px;border-radius:0 12px 12px 0/0 15px 15px 0;background:linear-gradient(to bottom,#3A7F3A 0,#6FB26F 2px,#8CC48C 3px,#4FA04F 5px,#3D9A3D 10px,#3AA23A 20px,#34963A 26px,#2A7F2A 30px);box-shadow:inset 1px 0 #1E6E5A"></div>
<svg style="left:0px;top:994px" width="32" height="30" viewBox="0 0 32 30">
<path d="M13 7 Q17 5.5 21.5 6 L20 13 Q16 12.3 12 13.5 Z" fill="#F4661E"/>
<path d="M22 9 Q25.5 8.5 29 8.5 L27.5 15 Q24.5 15.5 21 15.5 Z" fill="#86D000"/>
<path d="M12 14 Q16 13.3 19.5 13.8 L18.5 21 Q14.5 20.5 10.5 20.5 Z" fill="#4A70F0"/>
<path d="M19.8 16 Q23.5 16 27 15.8 L26 23 Q22.5 23.3 18.8 22.3 Z" fill="#FFCC10"/>
<path d="M16 6.5 L15 12.5 M15 14 L14 20" stroke="#fff" stroke-opacity="0.35" stroke-width="1"/>
</svg>
<div class="t" style="left:35px;top:999px;font-size:16px;line-height:22px;font-weight:bold;font-style:italic;color:#fff;text-shadow:1px 1px #1C4E1C">пуск</div>
<div class="b" style="left:105px;top:998px;width:160px;height:24px;background:#1E4FB8;border-radius:3px;box-shadow:inset 1px 1px #183F94,inset -1px -1px #3A6AD0"></div>
<svg style="left:114px;top:1000px" width="20" height="22" viewBox="0 2 20 22">
<rect x="3" y="7" width="10" height="3" fill="#000"/>
<path d="M12.5 5.5 L16 8.5 L12.5 11.5 Z" fill="#000"/>
<rect x="9" y="5" width="2" height="7" fill="#000"/>
<path d="M2 20 L10 12 L12 12 L12 13 L5 20 Z" fill="#A77FF0" stroke="#000" stroke-width="1.2" stroke-linejoin="round"/>
<path d="M7 20 L12.5 14.5 L17 20 Z" fill="#A77FF0" stroke="#000" stroke-width="1.2" stroke-linejoin="round"/>
<path d="M10 20 L14 16" stroke="#000" stroke-width="1.3"/>
</svg>
<div class="t" style="left:136px;top:1003px;font-size:11px;line-height:13px;letter-spacing:-0.1px;color:#fff">NcStudio AD. Engravi...</div>
<div class="b" style="left:1116px;top:1001px;width:17px;height:16px;background:#3467D8"></div>
<div class="t" style="left:1117px;top:1003px;font-size:11px;line-height:13px;color:#fff">EN</div>
<div class="b" style="left:1151px;top:994px;width:129px;height:30px;background:linear-gradient(to bottom,#1290E8 0,#19B9F3 1px,#0CA3EE 4px,#0996E6 20px,#0B89DE 27px,#0A6FC7 30px);border-left:1px solid #095BC9"></div>
<svg style="left:1155px;top:996px" width="80" height="26" viewBox="0 0 80 26">
<rect x="7" y="7" width="8.5" height="6.5" fill="#2C2C5E" stroke="#C8CCE0" stroke-width="0.8"/>
<ellipse cx="11" cy="16" rx="4" ry="1.8" fill="#F0EEF8"/>
<rect x="9" y="14" width="4" height="1" fill="#8088B0"/>
<path d="M17 7.5 Q18.5 10 17 12.5 M19.5 6 Q21.8 10 19.5 14 M22 4.5 Q25 10 22 15.5" stroke="#E6DCCC" fill="none" stroke-width="1.1"/>
<path d="M27 6 L27 11 L30 9 L33 12 L34.5 9.5 L31.5 7 L34 5.5 Z" fill="#4CCB2A"/>
<path d="M29 15 L37 10 L40.5 14 L32 19.5 Z" fill="#A8A8A8" stroke="#303030" stroke-width="0.8"/>
<path d="M31 15.5 L37 11.8 M32.5 17 L38.5 13.3" stroke="#505050" stroke-width="0.6"/>
<path d="M43 20 V16 H46 V13 H49 V11 H52 V9 H55 V7 H59 V20 Z" fill="#fff"/>
<g shape-rendering="crispEdges" fill="#1E9A00">
<rect x="44" y="17" width="2" height="2"/><rect x="47" y="15" width="2" height="4"/><rect x="50" y="13" width="2" height="6"/><rect x="53" y="11" width="2" height="8"/><rect x="56" y="9" width="2" height="10"/>
</g>
<path d="M68.5 6 Q71 6.5 75 5 Q74.8 15 68.5 19.5 Q62.2 15 62 5 Q66 6.5 68.5 6 Z" fill="#D01818" stroke="#E8E8F0" stroke-width="1.2"/>
<path d="M66.5 10 L70.5 14 M70.5 10 L66.5 14" stroke="#fff" stroke-width="1.6"/>
</svg>
<div class="t" style="left:1239px;top:1003px;font-size:11px;line-height:13px;color:#fff">16:41</div>
</body></html>
